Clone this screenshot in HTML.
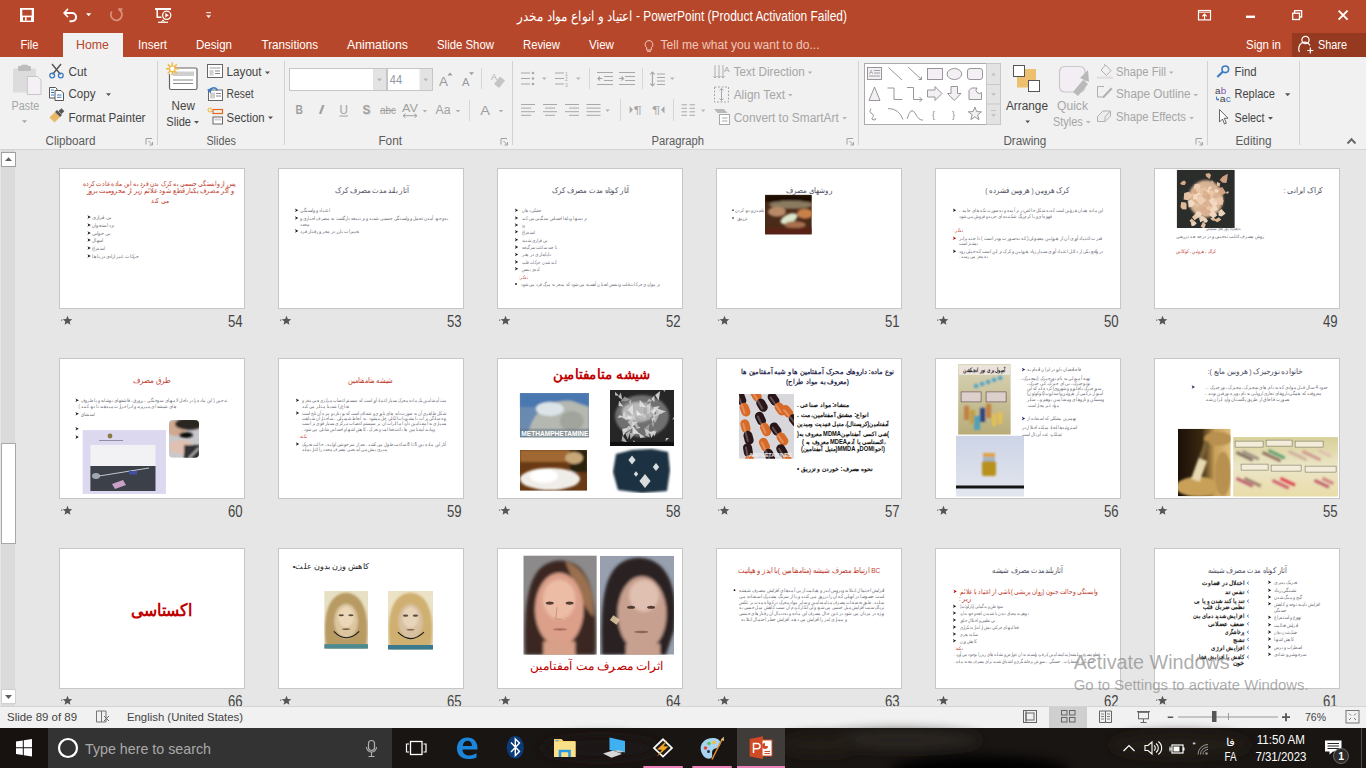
<!DOCTYPE html>
<html><head><meta charset="utf-8"><title>PowerPoint</title>
<style>
html,body{margin:0;padding:0;width:1366px;height:768px;overflow:hidden;background:#e6e6e6;}
svg{display:block;font-family:"Liberation Sans",sans-serif;}
text{font-family:"Liberation Sans",sans-serif;}
</style></head><body>
<svg width="1366" height="768" viewBox="0 0 1366 768">
<rect x="0" y="0" width="1366" height="768" fill="#e6e6e6" />
<rect x="0" y="0" width="1366" height="57" fill="#b7472a" />
<rect x="0" y="57" width="1366" height="92" fill="#f1f1f1" />
<rect x="0" y="149" width="1366" height="1" fill="#d4d4d4" />
<rect x="63" y="33" width="60" height="24" fill="#f1f1f1" />
<rect x="1292" y="33" width="74" height="24" fill="#953a21" />
<text x="517" y="21" font-size="14" fill="#ffffff" textLength="330" lengthAdjust="spacingAndGlyphs" >اعتیاد و انواع مواد مخدر - PowerPoint (Product Activation Failed)</text>
<rect x="20" y="8" width="14" height="14" fill="#ffffff" />
<rect x="22.3" y="9.8" width="9.4" height="5.8" fill="#b7472a" />
<rect x="23" y="17.2" width="8" height="3.4" fill="#b7472a" />
<rect x="25" y="17.2" width="1.6" height="3.4" fill="#ffffff" />
<path d="M64.5,13 H72 A4.1,4.1 0 0 1 72,21.2 H69.5" fill="none" stroke="#ffffff" stroke-width="2" />
<path d="M63,13 L67.5,8.3 L68.5,9.5 L65.2,13 L68.5,16.5 L67.5,17.7 Z" fill="#ffffff" />
<path d="M86,13.2 L91.3,13.2 L88.65,16.3 Z" fill="#ffffff" />
<path d="M118.5,9.5 A5.6,5.6 0 1 1 111.8,11.5" fill="none" stroke="#d9907c" stroke-width="1.8" />
<path d="M118.2,8 L123,8.6 L120.5,12.6 Z" fill="#d9907c" />
<rect x="155" y="8" width="16" height="2" fill="#ffffff" />
<path d="M157.2,10 V17.3 H161.5" fill="none" stroke="#ffffff" stroke-width="1.5" />
<circle cx="166.7" cy="15.3" r="4.1" fill="none" stroke="#ffffff" stroke-width="1.3"/>
<path d="M165.3,13 L168.8,15.3 L165.3,17.6 Z" fill="#ffffff" />
<path d="M158,22.3 H168" fill="none" stroke="#ffffff" stroke-width="1.2" />
<path d="M161.5,22 L163,19.8 L164.5,22" fill="none" stroke="#ffffff" stroke-width="1" />
<rect x="206.2" y="12.2" width="4.8" height="1" fill="#ffffff" />
<path d="M206.2,15.3 L211,15.3 L208.6,18 Z" fill="#ffffff" />
<rect x="1198.5" y="10.5" width="12" height="9.4" fill="none" stroke="#ffffff" stroke-width="1.2" />
<line x1="1198.5" y1="12.2" x2="1210.5" y2="12.2" stroke="#ffffff" stroke-width="1" />
<path d="M1204.5,19.5 V14.2 M1202.3,16.3 L1204.5,14 L1206.7,16.3" fill="none" stroke="#ffffff" stroke-width="1.2" />
<rect x="1246" y="15.6" width="9" height="2.4" fill="#ffffff" />
<rect x="1292.7" y="13.2" width="6.8" height="6.3" fill="none" stroke="#ffffff" stroke-width="1.3" />
<path d="M1294.6,13.2 V10.6 H1301.6 V17 H1299.5" fill="none" stroke="#ffffff" stroke-width="1.3" />
<path d="M1338.6,10.6 L1347.6,19.6 M1347.6,10.6 L1338.6,19.6" fill="none" stroke="#ffffff" stroke-width="1.9" />
<text x="20.5" y="49" font-size="12" fill="#ffffff" textLength="18" lengthAdjust="spacingAndGlyphs" >File</text>
<text x="138" y="49" font-size="12" fill="#ffffff" textLength="29" lengthAdjust="spacingAndGlyphs" >Insert</text>
<text x="196" y="49" font-size="12" fill="#ffffff" textLength="36" lengthAdjust="spacingAndGlyphs" >Design</text>
<text x="261.5" y="49" font-size="12" fill="#ffffff" textLength="56.5" lengthAdjust="spacingAndGlyphs" >Transitions</text>
<text x="347" y="49" font-size="12" fill="#ffffff" textLength="61" lengthAdjust="spacingAndGlyphs" >Animations</text>
<text x="437" y="49" font-size="12" fill="#ffffff" textLength="57" lengthAdjust="spacingAndGlyphs" >Slide Show</text>
<text x="523" y="49" font-size="12" fill="#ffffff" textLength="37" lengthAdjust="spacingAndGlyphs" >Review</text>
<text x="589" y="49" font-size="12" fill="#ffffff" textLength="25" lengthAdjust="spacingAndGlyphs" >View</text>
<text x="76" y="49" font-size="12" fill="#b7472a" textLength="33" lengthAdjust="spacingAndGlyphs" >Home</text>
<path d="M649,40.5 a4,4 0 0 0 -2.3,7.2 v2.3 h4.6 v-2.3 a4,4 0 0 0 -2.3,-7.2 z" fill="none" stroke="#f0c7bb" stroke-width="1" />
<line x1="647" y1="51.3" x2="651" y2="51.3" stroke="#f0c7bb" stroke-width="1" />
<text x="660.5" y="49" font-size="12" fill="#f0c7bb" textLength="159" lengthAdjust="spacingAndGlyphs" >Tell me what you want to do...</text>
<text x="1246" y="49" font-size="12" fill="#ffffff" textLength="35" lengthAdjust="spacingAndGlyphs" >Sign in</text>
<circle cx="1305.5" cy="40" r="3.6" fill="none" stroke="#ffffff" stroke-width="1.2"/>
<path d="M1299.5,52 a6,6.5 0 0 1 10.5,-6.5" fill="none" stroke="#ffffff" stroke-width="1.2" />
<path d="M1310.3,47.5 v6 M1307.3,50.5 h6" fill="none" stroke="#ffffff" stroke-width="1.2" />
<text x="1318" y="49" font-size="12" fill="#ffffff" textLength="29" lengthAdjust="spacingAndGlyphs" >Share</text>
<rect x="157" y="61" width="1" height="84" fill="#d2d2d2" />
<rect x="284" y="61" width="1" height="84" fill="#d2d2d2" />
<rect x="512" y="61" width="1" height="84" fill="#d2d2d2" />
<rect x="858" y="61" width="1" height="84" fill="#d2d2d2" />
<rect x="1207" y="61" width="1" height="84" fill="#d2d2d2" />
<rect x="1299" y="61" width="1" height="84" fill="#d2d2d2" />
<text x="45.5" y="145.4" font-size="12" fill="#5c5c5c" textLength="50" lengthAdjust="spacingAndGlyphs" >Clipboard</text>
<text x="206.4" y="145.4" font-size="12" fill="#5c5c5c" textLength="29.4" lengthAdjust="spacingAndGlyphs" >Slides</text>
<text x="378.4" y="145.4" font-size="12" fill="#5c5c5c" textLength="23.7" lengthAdjust="spacingAndGlyphs" >Font</text>
<text x="651.4" y="145.4" font-size="12" fill="#5c5c5c" textLength="52.6" lengthAdjust="spacingAndGlyphs" >Paragraph</text>
<text x="1003.4" y="145.4" font-size="12" fill="#5c5c5c" textLength="43" lengthAdjust="spacingAndGlyphs" >Drawing</text>
<text x="1235.5" y="145.4" font-size="12" fill="#5c5c5c" textLength="36" lengthAdjust="spacingAndGlyphs" >Editing</text>
<path d="M146,144.5 V138.5 H152" fill="none" stroke="#a0a0a0" stroke-width="1" />
<path d="M148.5,141 L152.5,145 M152.5,142 V145 H149.5" fill="none" stroke="#a0a0a0" stroke-width="1" />
<path d="M501,144.5 V138.5 H507" fill="none" stroke="#a0a0a0" stroke-width="1" />
<path d="M503.5,141 L507.5,145 M507.5,142 V145 H504.5" fill="none" stroke="#a0a0a0" stroke-width="1" />
<path d="M847,144.5 V138.5 H853" fill="none" stroke="#a0a0a0" stroke-width="1" />
<path d="M849.5,141 L853.5,145 M853.5,142 V145 H850.5" fill="none" stroke="#a0a0a0" stroke-width="1" />
<path d="M1196,144.5 V138.5 H1202" fill="none" stroke="#a0a0a0" stroke-width="1" />
<path d="M1198.5,141 L1202.5,145 M1202.5,142 V145 H1199.5" fill="none" stroke="#a0a0a0" stroke-width="1" />
<path d="M1347.5,143.5 L1351.5,139.3 L1355.5,143.5" fill="none" stroke="#6a6a6a" stroke-width="2" />
<rect x="13" y="68.5" width="23" height="24" fill="#dcdcdc" rx="1.5" />
<rect x="18" y="66" width="13" height="5" fill="#bdbdbd" rx="1" />
<rect x="21" y="64.8" width="7" height="3" fill="#bdbdbd" rx="1" />
<path d="M27.3,76.5 H37.5 L41,80 V94.5 H27.3 Z" fill="#f5f0f5" stroke="#c6c6c6" stroke-width="1" />
<text x="11.6" y="110" font-size="12" fill="#a6a6a6" textLength="27.6" lengthAdjust="spacingAndGlyphs" >Paste</text>
<path d="M22,120.3 L27,120.3 L24.5,123 Z" fill="#a6a6a6" />
<path d="M52,64 L60.5,74.5 M61,64 L52.5,74.5" fill="none" stroke="#555" stroke-width="1.4" />
<circle cx="52.2" cy="75.5" r="2.4" fill="none" stroke="#3b7bc4" stroke-width="1.3"/>
<circle cx="60.8" cy="75.5" r="2.4" fill="none" stroke="#3b7bc4" stroke-width="1.3"/>
<text x="68.5" y="76" font-size="12" fill="#444444" textLength="18.4" lengthAdjust="spacingAndGlyphs" >Cut</text>
<path d="M49.5,87.5 H55.5 L57,89 V98 H49.5 Z" fill="#fff" stroke="#555" stroke-width="1" />
<path d="M55,90.5 H61 L63.5,93 V100.5 H55 Z" fill="#fff" stroke="#555" stroke-width="1" />
<line x1="51" y1="90" x2="54" y2="90" stroke="#3b7bc4" stroke-width="1" />
<line x1="51" y1="92.5" x2="54" y2="92.5" stroke="#3b7bc4" stroke-width="1" />
<line x1="51" y1="95" x2="54" y2="95" stroke="#3b7bc4" stroke-width="1" />
<line x1="57" y1="95" x2="61.5" y2="95" stroke="#3b7bc4" stroke-width="1" />
<line x1="57" y1="97.3" x2="61.5" y2="97.3" stroke="#3b7bc4" stroke-width="1" />
<text x="68.5" y="98.3" font-size="12" fill="#444444" textLength="27" lengthAdjust="spacingAndGlyphs" >Copy</text>
<path d="M106,93.3 L111,93.3 L108.5,96 Z" fill="#555" />
<path d="M49.5,117.5 L55,112 L60,117 L54.5,122.5 Z" fill="#e8b864" />
<path d="M55,112 L60,117 L62,115 L57,110 Z" fill="#555" />
<path d="M58.5,111 L61.5,108.3 L64.3,111.2 L61.5,114 Z" fill="#555" />
<text x="68.5" y="121.5" font-size="12" fill="#444444" textLength="77" lengthAdjust="spacingAndGlyphs" >Format Painter</text>
<path d="M173.5,68 H195.5 Q197,68 197,69.5 V88 Q197,89.5 195.5,89.5 H171 Q169.5,89.5 169.5,88 V74" fill="#fff" stroke="#666" stroke-width="1.2" />
<rect x="173" y="71.5" width="21" height="4.5" fill="#cfcfcf" />
<line x1="173" y1="80" x2="193" y2="80" stroke="#888" stroke-width="1" />
<line x1="173" y1="83.5" x2="193" y2="83.5" stroke="#888" stroke-width="1" />
<line x1="175.3" y1="68.8" x2="178.60000000000002" y2="68.8" stroke="#f0b840" stroke-width="1.5" />
<line x1="174.42132034355964" y1="70.92132034355964" x2="176.75477272147526" y2="73.25477272147525" stroke="#f0b840" stroke-width="1.5" />
<line x1="172.3" y1="71.8" x2="172.3" y2="75.1" stroke="#f0b840" stroke-width="1.5" />
<line x1="170.17867965644038" y1="70.92132034355964" x2="167.84522727852476" y2="73.25477272147525" stroke="#f0b840" stroke-width="1.5" />
<line x1="169.3" y1="68.8" x2="166.0" y2="68.8" stroke="#f0b840" stroke-width="1.5" />
<line x1="170.17867965644038" y1="66.67867965644035" x2="167.84522727852476" y2="64.34522727852475" stroke="#f0b840" stroke-width="1.5" />
<line x1="172.3" y1="65.8" x2="172.3" y2="62.5" stroke="#f0b840" stroke-width="1.5" />
<line x1="174.42132034355964" y1="66.67867965644035" x2="176.75477272147526" y2="64.34522727852475" stroke="#f0b840" stroke-width="1.5" />
<circle cx="172.3" cy="68.8" r="2.8" fill="#ffffff" stroke="#f0b840" stroke-width="1.2"/>
<text x="171.5" y="109.5" font-size="12" fill="#444444" textLength="23.3" lengthAdjust="spacingAndGlyphs" >New</text>
<text x="166.3" y="126" font-size="12" fill="#444444" textLength="24.7" lengthAdjust="spacingAndGlyphs" >Slide</text>
<path d="M194,121 L199,121 L196.5,123.8 Z" fill="#555" />
<rect x="207.5" y="64.5" width="15" height="13" fill="#fff" stroke="#666" stroke-width="1" />
<rect x="209.5" y="67" width="11" height="2" fill="#cfcfcf" />
<rect x="209.5" y="70" width="4" height="5.5" fill="#cfcfcf" />
<line x1="215" y1="71" x2="220" y2="71" stroke="#888" stroke-width="1" />
<line x1="215" y1="73.5" x2="220" y2="73.5" stroke="#888" stroke-width="1" />
<text x="226.6" y="75.7" font-size="12" fill="#444444" textLength="35" lengthAdjust="spacingAndGlyphs" >Layout</text>
<path d="M265,71.5 L270,71.5 L267.5,74.2 Z" fill="#555" />
<rect x="208.5" y="90" width="14" height="10.5" fill="#fff" stroke="#666" stroke-width="1" />
<rect x="210" y="92.5" width="5" height="6" fill="#cfcfcf" />
<line x1="216" y1="93.5" x2="221" y2="93.5" stroke="#888" stroke-width="1" />
<line x1="216" y1="96" x2="221" y2="96" stroke="#888" stroke-width="1" />
<path d="M209,91.5 A4.5,4.5 0 0 1 217.5,90.5" fill="none" stroke="#3b7bc4" stroke-width="1.5" />
<path d="M207,89.5 L210.5,93.5 L212,88.8 Z" fill="#3b7bc4" />
<text x="226.6" y="98.3" font-size="12" fill="#444444" textLength="27" lengthAdjust="spacingAndGlyphs" >Reset</text>
<rect x="213" y="109.5" width="9.5" height="4" fill="none" stroke="#e06a1f" stroke-width="1.2" />
<rect x="213" y="117" width="9.5" height="7" fill="#fff" stroke="#666" stroke-width="1" />
<rect x="214.5" y="118.5" width="6.5" height="2" fill="#cfcfcf" />
<line x1="211.0" y1="110.0" x2="212.8" y2="110.0" stroke="#f0b840" stroke-width="1" />
<line x1="210.70710678118655" y1="110.70710678118655" x2="211.97989898732234" y2="111.97989898732233" stroke="#f0b840" stroke-width="1" />
<line x1="210.0" y1="111.0" x2="210.0" y2="112.8" stroke="#f0b840" stroke-width="1" />
<line x1="209.29289321881345" y1="110.70710678118655" x2="208.02010101267766" y2="111.97989898732233" stroke="#f0b840" stroke-width="1" />
<line x1="209.0" y1="110.0" x2="207.2" y2="110.0" stroke="#f0b840" stroke-width="1" />
<line x1="209.29289321881345" y1="109.29289321881345" x2="208.02010101267766" y2="108.02010101267767" stroke="#f0b840" stroke-width="1" />
<line x1="210.0" y1="109.0" x2="210.0" y2="107.2" stroke="#f0b840" stroke-width="1" />
<line x1="210.70710678118655" y1="109.29289321881345" x2="211.97989898732234" y2="108.02010101267767" stroke="#f0b840" stroke-width="1" />
<text x="226.6" y="121.5" font-size="12" fill="#444444" textLength="38" lengthAdjust="spacingAndGlyphs" >Section</text>
<path d="M268,116.5 L273,116.5 L270.5,119.2 Z" fill="#555" />
<rect x="289.5" y="68.5" width="97" height="22" fill="#ffffff" stroke="#c6c6c6" stroke-width="1" />
<rect x="373" y="69" width="13" height="21" fill="#e3e3e3" />
<path d="M377,78.5 L382,78.5 L379.5,81.3 Z" fill="#b5b5b5" />
<rect x="387.5" y="68.5" width="45" height="22" fill="#ffffff" stroke="#c6c6c6" stroke-width="1" />
<rect x="419.5" y="69" width="12.5" height="21" fill="#e3e3e3" />
<path d="M423.3,78.5 L428.3,78.5 L425.8,81.3 Z" fill="#b5b5b5" />
<text x="389.8" y="84.2" font-size="12" fill="#8d97a8" textLength="12.2" lengthAdjust="spacingAndGlyphs" >44</text>
<text x="439" y="85.5" font-size="13" fill="#9a9a9a" textLength="9" lengthAdjust="spacingAndGlyphs" >A</text>
<path d="M447.5,75.5 L450,72.5 L452.5,75.5 Z" fill="#9a9a9a" />
<text x="462" y="85.5" font-size="10.5" fill="#9a9a9a" textLength="7.5" lengthAdjust="spacingAndGlyphs" >A</text>
<path d="M469,72.3 L474,72.3 L471.5,75 Z" fill="#9a9a9a" />
<rect x="481" y="68" width="1" height="21" fill="#d6d6d6" />
<text x="491" y="80" font-size="9" fill="#b0b0b0" textLength="6" lengthAdjust="spacingAndGlyphs" >A</text>
<path d="M494,84 L500,76.5 L505,80.5 L499,88 Z" fill="#c4c4c4" />
<text x="295.6" y="113.7" font-size="12" fill="#a0a0a0" textLength="7.4" lengthAdjust="spacingAndGlyphs" font-weight="bold" >B</text>
<text x="318" y="113.7" font-size="12" fill="#a0a0a0" textLength="6.7" lengthAdjust="spacingAndGlyphs" font-style="italic">I</text>
<text x="339.5" y="113.7" font-size="12" fill="#a0a0a0" textLength="8.4" lengthAdjust="spacingAndGlyphs" >U</text>
<line x1="339.5" y1="116" x2="348" y2="116" stroke="#a0a0a0" stroke-width="1" />
<text x="363.5" y="114.7" font-size="12" fill="#d9d9d9" textLength="7.8" lengthAdjust="spacingAndGlyphs" font-weight="bold" >S</text>
<text x="362.5" y="113.7" font-size="12" fill="#a0a0a0" textLength="7.8" lengthAdjust="spacingAndGlyphs" font-weight="bold" >S</text>
<text x="380" y="113.7" font-size="11" fill="#a0a0a0" textLength="16" lengthAdjust="spacingAndGlyphs" >abc</text>
<line x1="380" y1="110.5" x2="396" y2="110.5" stroke="#a0a0a0" stroke-width="1" />
<text x="402" y="111.5" font-size="10.5" fill="#a0a0a0" textLength="16" lengthAdjust="spacingAndGlyphs" >AV</text>
<path d="M403,115.7 H417 M405.5,113.7 L403,115.7 L405.5,117.7 M414.5,113.7 L417,115.7 L414.5,117.7" fill="none" stroke="#a0a0a0" stroke-width="1" />
<path d="M422.6,110 L427,110 L424.8,112.5 Z" fill="#b0b0b0" />
<text x="435.5" y="114.2" font-size="12" fill="#a0a0a0" textLength="15" lengthAdjust="spacingAndGlyphs" >Aa</text>
<path d="M455.7,110 L460.3,110 L458,112.5 Z" fill="#b0b0b0" />
<rect x="469" y="100" width="1" height="21" fill="#d6d6d6" />
<text x="480.3" y="114.7" font-size="13" fill="#a0a0a0" textLength="9.7" lengthAdjust="spacingAndGlyphs" >A</text>
<path d="M498.7,110 L503.3,110 L501,112.5 Z" fill="#b0b0b0" />
<circle cx="533" cy="73.0" r="1.3" fill="#a8a8a8"/>
<line x1="521" y1="73.0" x2="530" y2="73.0" stroke="#a8a8a8" stroke-width="1" />
<circle cx="533" cy="78.5" r="1.3" fill="#a8a8a8"/>
<line x1="521" y1="78.5" x2="530" y2="78.5" stroke="#a8a8a8" stroke-width="1" />
<circle cx="533" cy="84.0" r="1.3" fill="#a8a8a8"/>
<line x1="521" y1="84.0" x2="530" y2="84.0" stroke="#a8a8a8" stroke-width="1" />
<path d="M542,77.5 L546.5,77.5 L544.25,80 Z" fill="#b5b5b5" />
<line x1="555" y1="73.0" x2="564" y2="73.0" stroke="#a8a8a8" stroke-width="1" />
<line x1="555" y1="78.5" x2="564" y2="78.5" stroke="#a8a8a8" stroke-width="1" />
<line x1="555" y1="84.0" x2="564" y2="84.0" stroke="#a8a8a8" stroke-width="1" />
<text x="565" y="75.5" font-size="5" fill="#a8a8a8" >1</text>
<text x="565" y="81" font-size="5" fill="#a8a8a8" >2</text>
<text x="565" y="86.5" font-size="5" fill="#a8a8a8" >3</text>
<path d="M576,77.5 L580.5,77.5 L578.25,80 Z" fill="#b5b5b5" />
<rect x="589" y="68" width="1" height="21" fill="#d6d6d6" />
<line x1="597" y1="72.5" x2="613" y2="72.5" stroke="#a8a8a8" stroke-width="1" />
<line x1="604" y1="76.5" x2="613" y2="76.5" stroke="#a8a8a8" stroke-width="1" />
<line x1="604" y1="80.5" x2="613" y2="80.5" stroke="#a8a8a8" stroke-width="1" />
<line x1="597" y1="84.5" x2="613" y2="84.5" stroke="#a8a8a8" stroke-width="1" />
<path d="M602.5,78.5 H598 M600,76.5 L598,78.5 L600,80.5" fill="none" stroke="#a8a8a8" stroke-width="1.2" />
<line x1="619" y1="72.5" x2="635" y2="72.5" stroke="#a8a8a8" stroke-width="1" />
<line x1="625" y1="76.5" x2="635" y2="76.5" stroke="#a8a8a8" stroke-width="1" />
<line x1="625" y1="80.5" x2="635" y2="80.5" stroke="#a8a8a8" stroke-width="1" />
<line x1="619" y1="84.5" x2="635" y2="84.5" stroke="#a8a8a8" stroke-width="1" />
<path d="M619,78.5 H623.5 M621.5,76.5 L623.5,78.5 L621.5,80.5" fill="none" stroke="#a8a8a8" stroke-width="1.2" />
<rect x="642" y="68" width="1" height="21" fill="#d6d6d6" />
<path d="M652.5,72 V86 M650.3,74.3 L652.5,72 L654.7,74.3 M650.3,83.7 L652.5,86 L654.7,83.7" fill="none" stroke="#a8a8a8" stroke-width="1.2" />
<line x1="657" y1="74.0" x2="665" y2="74.0" stroke="#a8a8a8" stroke-width="1" />
<line x1="657" y1="77.5" x2="665" y2="77.5" stroke="#a8a8a8" stroke-width="1" />
<line x1="657" y1="81.0" x2="665" y2="81.0" stroke="#a8a8a8" stroke-width="1" />
<line x1="657" y1="84.5" x2="665" y2="84.5" stroke="#a8a8a8" stroke-width="1" />
<path d="M670,77.5 L674.5,77.5 L672.25,80 Z" fill="#b5b5b5" />
<line x1="521" y1="104.5" x2="535" y2="104.5" stroke="#a8a8a8" stroke-width="1" />
<line x1="521" y1="108.1" x2="531" y2="108.1" stroke="#a8a8a8" stroke-width="1" />
<line x1="521" y1="111.7" x2="535" y2="111.7" stroke="#a8a8a8" stroke-width="1" />
<line x1="521" y1="115.3" x2="531" y2="115.3" stroke="#a8a8a8" stroke-width="1" />
<line x1="543.0" y1="104.5" x2="557.0" y2="104.5" stroke="#a8a8a8" stroke-width="1" />
<line x1="545.0" y1="108.1" x2="555.0" y2="108.1" stroke="#a8a8a8" stroke-width="1" />
<line x1="543.0" y1="111.7" x2="557.0" y2="111.7" stroke="#a8a8a8" stroke-width="1" />
<line x1="545.0" y1="115.3" x2="555.0" y2="115.3" stroke="#a8a8a8" stroke-width="1" />
<line x1="565" y1="104.5" x2="579" y2="104.5" stroke="#a8a8a8" stroke-width="1" />
<line x1="569" y1="108.1" x2="579" y2="108.1" stroke="#a8a8a8" stroke-width="1" />
<line x1="565" y1="111.7" x2="579" y2="111.7" stroke="#a8a8a8" stroke-width="1" />
<line x1="569" y1="115.3" x2="579" y2="115.3" stroke="#a8a8a8" stroke-width="1" />
<line x1="586.5" y1="104.5" x2="600.5" y2="104.5" stroke="#a8a8a8" stroke-width="1" />
<line x1="586.5" y1="108.1" x2="600.5" y2="108.1" stroke="#a8a8a8" stroke-width="1" />
<line x1="586.5" y1="111.7" x2="600.5" y2="111.7" stroke="#a8a8a8" stroke-width="1" />
<line x1="586.5" y1="115.3" x2="600.5" y2="115.3" stroke="#a8a8a8" stroke-width="1" />
<path d="M605.3,109.5 L609.8,109.5 L607.55,112 Z" fill="#b5b5b5" />
<rect x="620" y="99" width="1" height="22" fill="#d6d6d6" />
<text x="633.5" y="114" font-size="10" fill="#a8a8a8" textLength="8.5" lengthAdjust="spacingAndGlyphs" >¶</text>
<path d="M629.6,106 L633,109.8 L629.6,113.6 Z" fill="#a8a8a8" />
<text x="652" y="114" font-size="10" fill="#a8a8a8" textLength="8.5" lengthAdjust="spacingAndGlyphs" >¶</text>
<path d="M664.5,106 L661,109.8 L664.5,113.6 Z" fill="#a8a8a8" />
<rect x="673" y="99" width="1" height="22" fill="#d6d6d6" />
<line x1="681.5" y1="104.8" x2="687" y2="104.8" stroke="#a8a8a8" stroke-width="1" />
<line x1="689.5" y1="104.8" x2="695" y2="104.8" stroke="#a8a8a8" stroke-width="1" />
<line x1="681.5" y1="108.3" x2="687" y2="108.3" stroke="#a8a8a8" stroke-width="1" />
<line x1="689.5" y1="108.3" x2="695" y2="108.3" stroke="#a8a8a8" stroke-width="1" />
<line x1="681.5" y1="111.8" x2="687" y2="111.8" stroke="#a8a8a8" stroke-width="1" />
<line x1="689.5" y1="111.8" x2="695" y2="111.8" stroke="#a8a8a8" stroke-width="1" />
<line x1="681.5" y1="115.3" x2="687" y2="115.3" stroke="#a8a8a8" stroke-width="1" />
<line x1="689.5" y1="115.3" x2="695" y2="115.3" stroke="#a8a8a8" stroke-width="1" />
<path d="M701,109.5 L705.5,109.5 L703.25,112 Z" fill="#b5b5b5" />
<text x="733.7" y="76" font-size="12" fill="#a6a6a6" textLength="71" lengthAdjust="spacingAndGlyphs" >Text Direction</text>
<path d="M807.7,71.5 L812.3,71.5 L810,74 Z" fill="#b5b5b5" />
<path d="M715,65 V78 M713.5,76 L715,78 L716.5,76" fill="none" stroke="#a8a8a8" stroke-width="0.9" />
<path d="M719,65 V78 M717.5,76 L719,78 L720.5,76" fill="none" stroke="#a8a8a8" stroke-width="0.9" />
<path d="M723,65 V78 M721.5,76 L723,78 L724.5,76" fill="none" stroke="#a8a8a8" stroke-width="0.9" />
<text x="724" y="71.5" font-size="8" fill="#a8a8a8" textLength="5.5" lengthAdjust="spacingAndGlyphs" >A</text>
<text x="733.7" y="98.6" font-size="12" fill="#a6a6a6" textLength="51.3" lengthAdjust="spacingAndGlyphs" >Align Text</text>
<path d="M788,94 L792.6,94 L790.3,96.5 Z" fill="#b5b5b5" />
<rect x="714.5" y="87" width="14" height="15" fill="none" stroke="#a8a8a8" stroke-width="1" stroke-dasharray="2,1.5"/>
<path d="M721.5,88.5 V100.5 M719.5,90.5 L721.5,88.5 L723.5,90.5 M719.5,98.5 L721.5,100.5 L723.5,98.5" fill="none" stroke="#a8a8a8" stroke-width="1" />
<text x="733.7" y="121.6" font-size="12" fill="#a6a6a6" textLength="105" lengthAdjust="spacingAndGlyphs" >Convert to SmartArt</text>
<path d="M842.3,117 L846.9,117 L844.6,119.5 Z" fill="#b5b5b5" />
<path d="M714,109 H724 L727.5,113 H717.5 Z" fill="#b8b8b8" />
<rect x="719.5" y="114.5" width="10" height="10" fill="#fff" stroke="#a8a8a8" stroke-width="1" />
<line x1="722" y1="118" x2="727.5" y2="118" stroke="#a8a8a8" stroke-width="1" />
<line x1="722" y1="121" x2="727.5" y2="121" stroke="#a8a8a8" stroke-width="1" />
<rect x="864.5" y="63.5" width="122" height="61" fill="#ffffff" stroke="#ababab" stroke-width="1" />
<rect x="986.5" y="63.5" width="14" height="61" fill="#e3e3e3" stroke="#c8c8c8" stroke-width="1" />
<line x1="986.5" y1="84.5" x2="1000.5" y2="84.5" stroke="#c8c8c8" stroke-width="1" />
<line x1="986.5" y1="104" x2="1000.5" y2="104" stroke="#c8c8c8" stroke-width="1" />
<path d="M991,75.5 L993.5,72.5 L996,75.5 Z" fill="#c4c4c4" />
<path d="M991,93 L996,93 L993.5,96 Z" fill="#c4c4c4" />
<line x1="991" y1="110.5" x2="996" y2="110.5" stroke="#c4c4c4" stroke-width="1" />
<path d="M991,114 L996,114 L993.5,117 Z" fill="#c4c4c4" />
<rect x="867.5" y="67.5" width="14" height="12" fill="#f4eff4" stroke="#8c8c8c" stroke-width="0.9" />
<text x="869" y="73.5" font-size="6" fill="#8c8c8c" >A</text>
<line x1="874" y1="70.5" x2="880" y2="70.5" stroke="#8c8c8c" stroke-width="0.8" />
<line x1="874" y1="73" x2="880" y2="73" stroke="#8c8c8c" stroke-width="0.8" />
<line x1="869" y1="76" x2="880" y2="76" stroke="#8c8c8c" stroke-width="0.8" />
<line x1="888.5" y1="67.5" x2="902" y2="80" stroke="#8c8c8c" stroke-width="0.9" />
<path d="M908,67 L921.5,79.5 M921.5,76.5 V79.5 H918.5" fill="none" stroke="#8c8c8c" stroke-width="0.9" />
<rect x="927.5" y="68.5" width="15" height="11" fill="#f4eff4" stroke="#8c8c8c" stroke-width="0.9" />
<ellipse cx="954.4" cy="74" rx="7.3" ry="5.5" fill="#f4eff4" stroke="#8c8c8c" stroke-width="0.9"/>
<rect x="967.5" y="68.5" width="15" height="11" fill="#f4eff4" stroke="#8c8c8c" stroke-width="0.9" rx="2.5" />
<path d="M869,100.5 L874.5,87 L880,100.5 Z" fill="#f4eff4" stroke="#8c8c8c" stroke-width="0.9" />
<path d="M887.5,88 H894 V99.5 H902.5" fill="none" stroke="#8c8c8c" stroke-width="0.9" />
<path d="M907,87.5 H913.5 V99.5 H922 M919.5,97 L922,99.5 L919.5,102" fill="none" stroke="#8c8c8c" stroke-width="0.9" />
<path d="M927.5,90 H935 V86.5 L942,93.5 L935,100.5 V97 H927.5 Z" fill="#f4eff4" stroke="#8c8c8c" stroke-width="0.9" />
<path d="M951,86.5 H957.5 V93.5 H961 L954.3,100.5 L947.5,93.5 H951 Z" fill="#f4eff4" stroke="#8c8c8c" stroke-width="0.9" />
<path d="M969,90.5 L971.5,88 H977 A3,3 0 0 0 981.5,92.5 V99.5 H969 Z" fill="#f4eff4" stroke="#8c8c8c" stroke-width="0.9" />
<path d="M871,108.5 Q868.5,111.5 871,113 Q875,115 872.5,117.5 Q870.5,119.5 874,120 Q876.5,120 875,118" fill="none" stroke="#8c8c8c" stroke-width="0.9" />
<path d="M888,108.5 Q899,108.5 903,119.5" fill="none" stroke="#8c8c8c" stroke-width="0.9" />
<path d="M907,119 Q911,106 915,113 Q919,121 923,120" fill="none" stroke="#8c8c8c" stroke-width="0.9" />
<text x="932" y="117.5" font-size="9" fill="#8c8c8c" >{</text>
<text x="952" y="117.5" font-size="9" fill="#8c8c8c" >}</text>
<path d="M974.9,107 L976.7,111.6 L981.5,111.8 L977.7,114.8 L979,119.6 L974.9,116.9 L970.8,119.6 L972.1,114.8 L968.3,111.8 L973.1,111.6 Z" fill="#f4eff4" stroke="#8c8c8c" stroke-width="0.9" />
<rect x="1017" y="69" width="19" height="18.5" fill="#edc06f" />
<rect x="1013.5" y="65.5" width="11" height="11" fill="#ffffff" stroke="#555" stroke-width="1" />
<rect x="1028.5" y="80.5" width="11" height="11" fill="#ffffff" stroke="#555" stroke-width="1" />
<text x="1006" y="110" font-size="12" fill="#444444" textLength="42" lengthAdjust="spacingAndGlyphs" >Arrange</text>
<path d="M1025.4,120.5 L1030,120.5 L1027.7,123.2 Z" fill="#555" />
<rect x="1059.5" y="66.5" width="25.5" height="25.5" fill="#f3eef3" stroke="#c9c9c9" stroke-width="1.2" rx="5" />
<path d="M1073,92 L1083,80 L1088,84 L1078,96 Z" fill="#b9b9b9" />
<path d="M1080,78 L1088,70 L1089,82 Z" fill="#b9b9b9" />
<text x="1057" y="110" font-size="12" fill="#a6a6a6" textLength="31" lengthAdjust="spacingAndGlyphs" >Quick</text>
<text x="1053" y="125.6" font-size="12" fill="#a6a6a6" textLength="29.7" lengthAdjust="spacingAndGlyphs" >Styles</text>
<path d="M1086,121 L1090.6,121 L1088.3,123.5 Z" fill="#b5b5b5" />
<path d="M1101,70 L1105.5,65 L1111,70.5 L1106.5,75.5 Z" fill="none" stroke="#b0b0b0" stroke-width="1" />
<path d="M1104,64 L1106,66" fill="none" stroke="#b0b0b0" stroke-width="1" />
<rect x="1097" y="76.5" width="16" height="2.5" fill="#e4dde4" />
<text x="1116" y="75.8" font-size="12" fill="#a6a6a6" textLength="50" lengthAdjust="spacingAndGlyphs" >Shape Fill</text>
<path d="M1169,71.5 L1173.6,71.5 L1171.3,74 Z" fill="#b5b5b5" />
<path d="M1104,86.5 H1097.5 V97 H1104" fill="none" stroke="#b0b0b0" stroke-width="1" />
<path d="M1103,96 L1111,87.5 L1112.5,89 L1104.5,97.5 L1102.5,98 Z" fill="#b0b0b0" />
<text x="1116" y="98.4" font-size="12" fill="#a6a6a6" textLength="74.6" lengthAdjust="spacingAndGlyphs" >Shape Outline</text>
<path d="M1193.4,94 L1198,94 L1195.7,96.5 Z" fill="#b5b5b5" />
<path d="M1097.5,116.5 L1103,111 H1110.5 V116 L1105,121.5 H1097.5 Z" fill="#ededed" stroke="#b0b0b0" stroke-width="1" />
<path d="M1105,121.5 V117 L1110.5,111" fill="none" stroke="#b0b0b0" stroke-width="1" />
<text x="1116" y="121.4" font-size="12" fill="#a6a6a6" textLength="70" lengthAdjust="spacingAndGlyphs" >Shape Effects</text>
<path d="M1189.4,117 L1194,117 L1191.7,119.5 Z" fill="#b5b5b5" />
<circle cx="1225.3" cy="69.3" r="3.3" fill="none" stroke="#3b7bc4" stroke-width="1.6"/>
<path d="M1222.8,71.8 L1217.3,77" fill="none" stroke="#3b7bc4" stroke-width="2.2" />
<text x="1234.5" y="75.7" font-size="12" fill="#444444" textLength="22" lengthAdjust="spacingAndGlyphs" >Find</text>
<text x="1215" y="94" font-size="9" fill="#444444" textLength="5.5" lengthAdjust="spacingAndGlyphs" >a</text>
<text x="1220.8" y="94" font-size="9" fill="#8e4fb5" textLength="5.5" lengthAdjust="spacingAndGlyphs" >b</text>
<text x="1219.8" y="101.5" font-size="9.5" fill="#444444" textLength="11" lengthAdjust="spacingAndGlyphs" >ac</text>
<rect x="1226" y="95.5" width="5" height="6" fill="#f1f1f1" />
<text x="1225.8" y="101.5" font-size="9.5" fill="#3b7bc4" textLength="5" lengthAdjust="spacingAndGlyphs" >c</text>
<path d="M1216.5,96.5 V99.5 H1219 M1217.5,98.3 L1219,99.5 L1217.5,100.7" fill="none" stroke="#3b7bc4" stroke-width="0.9" />
<text x="1234.5" y="98.4" font-size="12" fill="#444444" textLength="40.4" lengthAdjust="spacingAndGlyphs" >Replace</text>
<path d="M1285,93.3 L1290.3,93.3 L1287.65,96.2 Z" fill="#555" />
<path d="M1219.5,109.5 V122 L1222.5,119 L1224.5,124 L1226.3,123.2 L1224.3,118.2 L1228,118.2 Z" fill="#fff" stroke="#555" stroke-width="0.9" />
<text x="1234.5" y="121.5" font-size="12" fill="#444444" textLength="30" lengthAdjust="spacingAndGlyphs" >Select</text>
<path d="M1268,117 L1273,117 L1270.5,119.7 Z" fill="#555" />
<rect x="59.5" y="168.5" width="185" height="140" fill="#ffffff" stroke="#c6c6c6" stroke-width="1" />
<rect x="278.5" y="168.5" width="185" height="140" fill="#ffffff" stroke="#c6c6c6" stroke-width="1" />
<rect x="497.5" y="168.5" width="185" height="140" fill="#ffffff" stroke="#c6c6c6" stroke-width="1" />
<rect x="716.5" y="168.5" width="185" height="140" fill="#ffffff" stroke="#c6c6c6" stroke-width="1" />
<rect x="935.5" y="168.5" width="185" height="140" fill="#ffffff" stroke="#c6c6c6" stroke-width="1" />
<rect x="1154.5" y="168.5" width="185" height="140" fill="#ffffff" stroke="#c6c6c6" stroke-width="1" />
<rect x="59.5" y="358.5" width="185" height="140" fill="#ffffff" stroke="#c6c6c6" stroke-width="1" />
<rect x="278.5" y="358.5" width="185" height="140" fill="#ffffff" stroke="#c6c6c6" stroke-width="1" />
<rect x="497.5" y="358.5" width="185" height="140" fill="#ffffff" stroke="#c6c6c6" stroke-width="1" />
<rect x="716.5" y="358.5" width="185" height="140" fill="#ffffff" stroke="#c6c6c6" stroke-width="1" />
<rect x="935.5" y="358.5" width="185" height="140" fill="#ffffff" stroke="#c6c6c6" stroke-width="1" />
<rect x="1154.5" y="358.5" width="185" height="140" fill="#ffffff" stroke="#c6c6c6" stroke-width="1" />
<rect x="59.5" y="548.5" width="185" height="140" fill="#ffffff" stroke="#c6c6c6" stroke-width="1" />
<rect x="278.5" y="548.5" width="185" height="140" fill="#ffffff" stroke="#c6c6c6" stroke-width="1" />
<rect x="497.5" y="548.5" width="185" height="140" fill="#ffffff" stroke="#c6c6c6" stroke-width="1" />
<rect x="716.5" y="548.5" width="185" height="140" fill="#ffffff" stroke="#c6c6c6" stroke-width="1" />
<rect x="935.5" y="548.5" width="185" height="140" fill="#ffffff" stroke="#c6c6c6" stroke-width="1" />
<rect x="1154.5" y="548.5" width="185" height="140" fill="#ffffff" stroke="#c6c6c6" stroke-width="1" />
<defs>
<linearGradient id="g51" x1="0" y1="0" x2="0" y2="1"><stop offset="0" stop-color="#1c0f08"/><stop offset="0.25" stop-color="#3a2414"/><stop offset="0.5" stop-color="#8a5a3a"/><stop offset="1" stop-color="#5a2a14"/></linearGradient>
<radialGradient id="g49" cx="0.5" cy="0.45" r="0.5"><stop offset="0" stop-color="#f0cfb0"/><stop offset="0.6" stop-color="#e2b896"/><stop offset="1" stop-color="#2c2e2c" stop-opacity="0"/></radialGradient>
<linearGradient id="gsky" x1="0" y1="0" x2="1" y2="1"><stop offset="0" stop-color="#3a6aa8"/><stop offset="0.5" stop-color="#7aa0c8"/><stop offset="1" stop-color="#e8e8e8"/></linearGradient>
<radialGradient id="gcry" cx="0.5" cy="0.45" r="0.6"><stop offset="0" stop-color="#f4f4f4"/><stop offset="0.5" stop-color="#b8b8b8"/><stop offset="1" stop-color="#202020"/></radialGradient>
<radialGradient id="gpow" cx="0.45" cy="0.65" r="0.55"><stop offset="0" stop-color="#ffffff"/><stop offset="0.55" stop-color="#f0e6dc"/><stop offset="1" stop-color="#8a4a1a"/></radialGradient>
<radialGradient id="gice" cx="0.5" cy="0.5" r="0.6"><stop offset="0" stop-color="#2a4a5a"/><stop offset="0.8" stop-color="#1a3040"/><stop offset="1" stop-color="#ffffff"/></radialGradient>
<linearGradient id="gvial" x1="0" y1="0" x2="0" y2="1"><stop offset="0" stop-color="#d8d4b8"/><stop offset="1" stop-color="#b8ac78"/></linearGradient>
<linearGradient id="gbg56" x1="0" y1="0" x2="0" y2="1"><stop offset="0" stop-color="#cdd4e6"/><stop offset="1" stop-color="#e2e6ee"/></linearGradient>
<linearGradient id="gsep" x1="0" y1="0" x2="1" y2="0"><stop offset="0" stop-color="#1a1008"/><stop offset="0.45" stop-color="#3a2810"/><stop offset="0.7" stop-color="#c8a058"/><stop offset="1" stop-color="#e0c080"/></linearGradient>
<linearGradient id="gcream" x1="0" y1="0" x2="0" y2="1"><stop offset="0" stop-color="#d8d098"/><stop offset="0.5" stop-color="#ece6c8"/><stop offset="1" stop-color="#e8dca8"/></linearGradient>
<radialGradient id="gskin" cx="0.5" cy="0.45" r="0.5"><stop offset="0" stop-color="#e8b8a0"/><stop offset="1" stop-color="#c88870"/></radialGradient>
<radialGradient id="gskin2" cx="0.5" cy="0.45" r="0.5"><stop offset="0" stop-color="#e0b8a8"/><stop offset="1" stop-color="#b08070"/></radialGradient>
<radialGradient id="gskin3" cx="0.5" cy="0.45" r="0.5"><stop offset="0" stop-color="#e8d0a8"/><stop offset="1" stop-color="#c8a880"/></radialGradient>
<filter id="bl" x="-20%" y="-20%" width="140%" height="140%"><feGaussianBlur stdDeviation="0.8"/></filter>
<filter id="bl2" x="-20%" y="-20%" width="140%" height="140%"><feGaussianBlur stdDeviation="1.5"/></filter>
</defs>
<text x="83" y="186.04" font-size="6.5" fill="#c0392b" textLength="153" lengthAdjust="spacingAndGlyphs" >‫پس از وابستگی جسمی به کرک بدن فرد به این ماده عادت کرده‬</text>
<text x="86.7" y="193.44" font-size="6.5" fill="#c0392b" textLength="147.0" lengthAdjust="spacingAndGlyphs" >‫و اگر مصرف یکبار قطع شود علائم زیر از محرومیت بروز‬</text>
<text x="151.4" y="202.74" font-size="6.5" fill="#c0392b" textLength="17.6" lengthAdjust="spacingAndGlyphs" >‫می کند‬</text>
<path d="M87.40,215.20 L90.80,217.00 L87.40,218.80 L88.40,217.00 Z" fill="#111" />
<text x="92" y="218.8" font-size="5" fill="#6e6e78" textLength="19" lengthAdjust="spacingAndGlyphs" >‫بی قراری‬</text>
<path d="M87.40,223.20 L90.80,225.00 L87.40,226.80 L88.40,225.00 Z" fill="#111" />
<text x="92" y="226.8" font-size="5" fill="#6e6e78" textLength="22" lengthAdjust="spacingAndGlyphs" >‫درد استخوان‬</text>
<path d="M87.40,231.20 L90.80,233.00 L87.40,234.80 L88.40,233.00 Z" fill="#111" />
<text x="92" y="234.8" font-size="5" fill="#6e6e78" textLength="18" lengthAdjust="spacingAndGlyphs" >‫بی خوابی‬</text>
<path d="M87.40,238.20 L90.80,240.00 L87.40,241.80 L88.40,240.00 Z" fill="#111" />
<text x="92" y="241.8" font-size="5" fill="#6e6e78" textLength="11" lengthAdjust="spacingAndGlyphs" >‫اسهال‬</text>
<path d="M87.40,246.20 L90.80,248.00 L87.40,249.80 L88.40,248.00 Z" fill="#111" />
<text x="92" y="249.8" font-size="5" fill="#6e6e78" textLength="13" lengthAdjust="spacingAndGlyphs" >‫استفراغ‬</text>
<path d="M87.40,254.20 L90.80,256.00 L87.40,257.80 L88.40,256.00 Z" fill="#111" />
<text x="92" y="257.8" font-size="5" fill="#6e6e78" textLength="47" lengthAdjust="spacingAndGlyphs" >‫حرکات غیر ارادی در پاها‬</text>
<text x="335" y="192.5" font-size="7.5" fill="#505064" textLength="73.3" lengthAdjust="spacingAndGlyphs" >‫آثار بلند مدت مصرف کرک‬</text>
<path d="M294.90,208.40 L298.30,210.20 L294.90,212.00 L295.90,210.20 Z" fill="#111" />
<text x="300" y="212.0" font-size="5" fill="#6e6e78" textLength="29.8" lengthAdjust="spacingAndGlyphs" >‫اعتیاد و وابستگی‬</text>
<path d="M294.90,216.20 L298.30,218.00 L294.90,219.80 L295.90,218.00 Z" fill="#111" />
<text x="300" y="219.8" font-size="5" fill="#6e6e78" textLength="148" lengthAdjust="spacingAndGlyphs" >‫به وجود آمدن تحمل و وابستگی جسمی شدید و در نتیجه بازگشت به مصرف اجباری و‬</text>
<text x="300" y="225.8" font-size="5" fill="#6e6e78" textLength="9.5" lengthAdjust="spacingAndGlyphs" >‫مجدد‬</text>
<path d="M294.90,229.10 L298.30,230.90 L294.90,232.70 L295.90,230.90 Z" fill="#111" />
<text x="300" y="232.7" font-size="5" fill="#6e6e78" textLength="59" lengthAdjust="spacingAndGlyphs" >‫تغییرات بارز در مغز و رفتار فرد‬</text>
<text x="552" y="192.5" font-size="7.5" fill="#505064" textLength="77" lengthAdjust="spacingAndGlyphs" >‫آثار کوتاه مدت مصرف کرک‬</text>
<path d="M514.80,208.40 L518.20,210.20 L514.80,212.00 L515.80,210.20 Z" fill="#111" />
<text x="522" y="212.0" font-size="5" fill="#6e6e78" textLength="19.4" lengthAdjust="spacingAndGlyphs" >‫خشکی دهان‬</text>
<path d="M514.80,216.20 L518.20,218.00 L514.80,219.80 L515.80,218.00 Z" fill="#111" />
<text x="522" y="219.8" font-size="5" fill="#6e6e78" textLength="64.7" lengthAdjust="spacingAndGlyphs" >‫در دستها و پاها احساس سنگینی می کند‬</text>
<path d="M514.80,223.20 L518.20,225.00 L514.80,226.80 L515.80,225.00 Z" fill="#111" />
<text x="522" y="226.8" font-size="5" fill="#6e6e78" textLength="2.7" lengthAdjust="spacingAndGlyphs" >‫تهوع‬</text>
<path d="M514.80,230.00 L518.20,231.80 L514.80,233.60 L515.80,231.80 Z" fill="#111" />
<text x="522" y="233.6" font-size="5" fill="#6e6e78" textLength="12.9" lengthAdjust="spacingAndGlyphs" >‫استفراغ‬</text>
<path d="M514.80,237.90 L518.20,239.70 L514.80,241.50 L515.80,239.70 Z" fill="#111" />
<text x="522" y="241.5" font-size="5" fill="#6e6e78" textLength="25" lengthAdjust="spacingAndGlyphs" >‫بی قراری شدید‬</text>
<path d="M514.80,245.30 L518.20,247.10 L514.80,248.90 L515.80,247.10 Z" fill="#111" />
<text x="522" y="248.9" font-size="5" fill="#6e6e78" textLength="35" lengthAdjust="spacingAndGlyphs" >‫تا چند ساعت سرگیجه‬</text>
<path d="M514.80,252.70 L518.20,254.50 L514.80,256.30 L515.80,254.50 Z" fill="#111" />
<text x="522" y="256.3" font-size="5" fill="#6e6e78" textLength="28.6" lengthAdjust="spacingAndGlyphs" >‫ناپایداری در مغز‬</text>
<path d="M514.80,260.10 L518.20,261.90 L514.80,263.70 L515.80,261.90 Z" fill="#111" />
<text x="522" y="263.7" font-size="5" fill="#6e6e78" textLength="34" lengthAdjust="spacingAndGlyphs" >‫کند شدن حرکات قلب‬</text>
<path d="M514.80,267.00 L518.20,268.80 L514.80,270.60 L515.80,268.80 Z" fill="#111" />
<text x="522" y="270.6" font-size="5" fill="#6e6e78" textLength="17.5" lengthAdjust="spacingAndGlyphs" >‫کندی تنفس‬</text>
<text x="519" y="278.8" font-size="5" fill="#c0392b" textLength="8.5" lengthAdjust="spacingAndGlyphs" >‫تذکر:‬</text>
<circle cx="516.00" cy="284.00" r="0.9" fill="#111"/>
<text x="521" y="285.8" font-size="5" fill="#6e6e78" textLength="138.7" lengthAdjust="spacingAndGlyphs" >‫در مواردی حرکات قلب و تنفس انچنان آهسته می شود که منجر به مرگ فرد می شود‬</text>
<text x="786.3" y="192.9" font-size="7.5" fill="#505064" textLength="46.2" lengthAdjust="spacingAndGlyphs" >‫روشهای مصرف‬</text>
<clipPath id="cl1"><rect x="765" y="194.8" width="46.8" height="39.8" rx="0"/></clipPath><g clip-path="url(#cl1)">
<rect x="765" y="194.8" width="46.8" height="39.8" fill="#4a2a18" />
<g filter="url(#bl)"><rect x="765" y="194.8" width="46.8" height="7" fill="#1a0c06"/><ellipse cx="791" cy="204.8" rx="22" ry="4" fill="#8a7a60"/><ellipse cx="777" cy="211.8" rx="9" ry="5" fill="#b88a68"/><ellipse cx="805" cy="213.8" rx="8" ry="5" fill="#c8804a"/><ellipse cx="789" cy="218.8" rx="9" ry="4.5" fill="#dce6cc" transform="rotate(-25 789 218.8)"/><ellipse cx="795" cy="224.8" rx="11" ry="3.5" fill="#a87050"/><rect x="765" y="227.8" width="46.8" height="6.799999999999997" fill="#5a2412"/></g>
</g>
<circle cx="733.00" cy="210.20" r="0.9" fill="#555"/>
<text x="735.4" y="212.0" font-size="5" fill="#6e6e78" textLength="28.6" lengthAdjust="spacingAndGlyphs" >‫بلعیدن و دود کردن‬</text>
<circle cx="733.00" cy="218.00" r="0.9" fill="#555"/>
<text x="737" y="219.8" font-size="5" fill="#6e6e78" textLength="10.4" lengthAdjust="spacingAndGlyphs" >‫تزریق‬</text>
<text x="985.3" y="192.9" font-size="7.5" fill="#505064" textLength="83.7" lengthAdjust="spacingAndGlyphs" >‫کرک هروبین ( هروبین فشرده )‬</text>
<path d="M952.80,208.40 L956.20,210.20 L952.80,212.00 L953.80,210.20 Z" fill="#111" />
<text x="959" y="212.0" font-size="5" fill="#6e6e78" textLength="144" lengthAdjust="spacingAndGlyphs" >‫این ماده همان هروئین است که به شکل خالص تر در آمده و به صورت تکه های جامد ،‬</text>
<text x="959" y="217.8" font-size="5" fill="#6e6e78" textLength="92.5" lengthAdjust="spacingAndGlyphs" >‫قهوه ای و یا کرم رنگ شکننده ای خرید و فروش می شود‬</text>
<text x="952.6" y="231.8" font-size="5" fill="#c0392b" textLength="10.1" lengthAdjust="spacingAndGlyphs" >‫تذکر :‬</text>
<path d="M952.80,236.50 L956.20,238.30 L952.80,240.10 L953.80,238.30 Z" fill="#c00000" />
<text x="959" y="240.1" font-size="5" fill="#6e6e78" textLength="143.3" lengthAdjust="spacingAndGlyphs" >‫قدرت اعتیاد آوری آن از هروئین معمولی( که به صورت پودر است ) تا چند برابر‬</text>
<text x="959" y="244.7" font-size="5" fill="#6e6e78" textLength="18.5" lengthAdjust="spacingAndGlyphs" >‫بیشتر است‬</text>
<path d="M952.80,249.40 L956.20,251.20 L952.80,253.00 L953.80,251.20 Z" fill="#111" />
<text x="959" y="253.0" font-size="5" fill="#6e6e78" textLength="144" lengthAdjust="spacingAndGlyphs" >‫در واقع یکی از دلایل اعتیاد آوری بسیار زیاد هروئین و کرک در این است که خیلی زود‬</text>
<text x="959" y="258.2" font-size="5" fill="#6e6e78" textLength="28.7" lengthAdjust="spacingAndGlyphs" >‫به مغز می رسد .‬</text>
<clipPath id="cl2"><rect x="1176.7" y="169.8" width="58.099999999999994" height="58.2" rx="0"/></clipPath><g clip-path="url(#cl2)">
<rect x="1176.7" y="169.8" width="58.099999999999994" height="58.2" fill="#2b2d2b" />
<g filter="url(#bl)"><ellipse cx="1205.75" cy="198.9" rx="17.429999999999996" ry="18.624000000000002" fill="#d8b494"/></g>
<g opacity="0.95"><polygon points="1195.8,203.8 1192.2,206.6 1188.7,207.5 1188.0,200.7 1191.6,199.4" fill="#f4dcc4"/><polygon points="1210.7,207.9 1209.3,209.4 1206.6,208.9 1207.4,207.2 1209.5,205.5" fill="#f4dcc4"/><polygon points="1229.2,192.0 1227.2,193.9 1226.0,192.9 1227.1,191.2" fill="#e8c2a0"/><polygon points="1215.8,213.5 1215.2,217.3 1209.9,215.6 1208.3,214.5 1211.1,211.8 1213.9,211.6" fill="#e8c2a0"/><polygon points="1206.5,196.4 1205.0,199.4 1201.8,198.3 1202.3,195.7 1204.5,195.2" fill="#d8a888"/><polygon points="1208.0,220.9 1206.2,222.7 1204.4,222.8 1203.1,220.5 1203.9,217.2 1206.2,217.9" fill="#f4dcc4"/><polygon points="1186.1,182.5 1184.8,185.0 1182.2,184.9 1180.0,183.7 1182.3,181.3 1184.4,180.4" fill="#dcb090"/><polygon points="1201.1,188.2 1199.4,190.3 1198.0,188.2 1199.4,187.0" fill="#f0d0b4"/><polygon points="1225.6,213.6 1221.7,216.6 1218.6,215.8 1218.4,211.6 1221.5,208.9" fill="#f4dcc4"/><polygon points="1215.8,206.6 1214.0,212.1 1210.4,211.4 1208.4,208.5 1211.1,204.9 1215.4,203.7" fill="#f0d0b4"/><polygon points="1216.3,219.3 1213.3,221.1 1210.1,218.8 1212.4,217.3" fill="#e8c2a0"/><polygon points="1221.3,219.7 1217.3,222.3 1213.9,220.3 1218.9,217.2" fill="#e8c2a0"/><polygon points="1214.8,206.2 1213.3,207.5 1209.3,207.8 1208.7,204.1 1213.1,203.4" fill="#f0d0b4"/><polygon points="1192.5,195.5 1188.2,200.2 1183.6,199.6 1184.2,193.0 1188.9,191.7" fill="#ecc8aa"/><polygon points="1202.1,195.1 1198.2,198.5 1195.2,195.3 1199.8,192.4" fill="#d8a888"/><polygon points="1217.9,209.8 1215.5,210.7 1212.5,211.9 1210.2,209.7 1211.9,205.9 1216.1,205.4" fill="#f4dcc4"/><polygon points="1213.5,207.0 1209.6,210.3 1206.9,207.0 1211.0,203.6" fill="#ecc8aa"/><polygon points="1206.8,189.3 1205.3,191.3 1203.6,190.7 1202.4,189.5 1203.3,187.2 1205.1,187.6" fill="#f4dcc4"/><polygon points="1211.8,196.3 1211.2,198.1 1209.5,197.6 1209.3,195.6 1210.9,195.1" fill="#ecc8aa"/><polygon points="1227.2,179.8 1226.3,182.9 1222.1,182.5 1219.8,179.8 1222.6,176.4 1227.8,173.8" fill="#d8a888"/><polygon points="1205.4,206.9 1204.5,209.6 1202.5,209.8 1199.9,207.7 1201.9,204.9 1205.3,205.5" fill="#e8c2a0"/><polygon points="1201.3,185.4 1197.6,188.7 1193.9,188.6 1194.4,184.4 1197.5,183.7" fill="#f0d0b4"/><polygon points="1217.1,201.7 1213.5,205.8 1208.7,200.8 1212.9,197.3" fill="#f4dcc4"/><polygon points="1214.2,183.0 1212.7,185.2 1210.7,183.9 1210.9,181.1 1212.3,180.6" fill="#d8a888"/><polygon points="1200.6,190.8 1199.3,193.6 1197.2,192.0 1195.6,190.3 1196.7,187.9 1199.2,188.0" fill="#ecc8aa"/><polygon points="1198.9,217.3 1194.5,220.2 1192.0,217.0 1196.0,213.3" fill="#f0d0b4"/><polygon points="1197.0,191.9 1195.4,194.3 1191.6,191.6 1195.0,189.8" fill="#d8a888"/><polygon points="1196.7,223.2 1194.6,225.6 1191.8,226.2 1190.9,223.4 1192.8,221.5 1195.1,221.5" fill="#f4dcc4"/><polygon points="1186.6,205.0 1186.5,209.4 1182.2,209.3 1180.5,207.1 1181.2,202.1 1186.0,202.5" fill="#e8c2a0"/><polygon points="1212.0,187.5 1210.0,189.4 1208.9,189.9 1208.0,188.5 1208.7,186.8 1210.8,186.4" fill="#f4dcc4"/><polygon points="1201.4,197.8 1197.5,199.7 1192.9,199.2 1193.2,194.6 1198.7,193.7" fill="#f4dcc4"/><polygon points="1226.2,193.1 1221.5,195.2 1218.0,193.4 1216.9,188.3 1222.5,187.3" fill="#d8a888"/><polygon points="1219.3,190.4 1217.3,192.8 1214.9,192.5 1214.4,191.7 1215.2,188.7 1218.1,189.7" fill="#f4dcc4"/><polygon points="1193.9,194.7 1192.9,196.6 1190.7,195.8 1190.6,194.3 1193.0,193.0" fill="#e8c2a0"/><polygon points="1210.4,192.4 1207.5,195.3 1205.8,194.9 1204.4,192.2 1205.4,189.7 1209.1,189.4" fill="#f4dcc4"/><polygon points="1210.5,193.8 1208.0,195.5 1206.5,194.4 1208.0,191.7" fill="#f0d0b4"/><polygon points="1211.1,174.9 1209.6,178.9 1206.4,176.8 1205.4,174.1 1208.9,173.0" fill="#dcb090"/><polygon points="1206.8,209.1 1202.2,211.3 1199.4,207.9 1202.9,205.4" fill="#d8a888"/><polygon points="1205.8,224.5 1204.1,228.7 1200.7,226.4 1203.0,221.8" fill="#ecc8aa"/><polygon points="1217.3,215.3 1213.2,218.6 1209.4,214.8 1212.6,209.9" fill="#f4dcc4"/><polygon points="1199.7,205.7 1198.4,206.9 1195.7,207.7 1195.0,205.4 1195.9,203.5 1198.2,203.7" fill="#e8c2a0"/><polygon points="1208.1,199.8 1205.0,204.4 1201.6,203.9 1199.4,200.1 1202.3,195.1 1206.8,197.0" fill="#dcb090"/><polygon points="1201.9,195.1 1201.4,198.7 1198.4,198.4 1195.9,195.6 1197.6,193.1 1200.3,192.7" fill="#f4dcc4"/><polygon points="1214.6,192.9 1210.7,198.3 1207.0,194.3 1211.8,189.4" fill="#ecc8aa"/><polygon points="1220.3,183.5 1219.4,186.5 1216.9,185.6 1217.0,181.9 1218.5,182.6" fill="#ecc8aa"/><polygon points="1206.4,200.2 1203.1,203.3 1200.1,204.9 1196.3,199.7 1198.8,197.3 1202.0,196.4" fill="#f0d0b4"/><polygon points="1202.3,212.5 1200.9,213.8 1198.9,214.0 1197.9,212.1 1199.0,211.0 1200.6,210.9" fill="#dcb090"/><polygon points="1201.8,213.5 1200.6,217.8 1197.7,217.4 1195.5,215.0 1196.0,211.4 1199.4,211.6" fill="#f4dcc4"/><polygon points="1209.0,194.5 1207.5,196.4 1205.9,196.2 1204.5,194.6 1205.2,190.9 1207.9,192.4" fill="#dcb090"/><polygon points="1210.1,211.9 1207.3,215.9 1202.0,214.9 1202.9,210.3 1207.2,209.3" fill="#dcb090"/><polygon points="1201.4,197.2 1199.9,198.1 1198.1,198.5 1197.6,196.7 1198.0,194.9 1200.4,194.9" fill="#e8c2a0"/><polygon points="1218.4,199.6 1217.1,202.0 1214.1,201.9 1213.2,198.8 1217.2,198.2" fill="#f0d0b4"/><polygon points="1205.8,218.5 1204.0,220.5 1200.3,222.3 1199.1,218.5 1201.5,216.0 1203.1,216.3" fill="#f4dcc4"/><polygon points="1218.6,203.5 1217.2,205.1 1215.3,205.3 1213.3,204.4 1215.0,202.0 1217.3,201.1" fill="#f4dcc4"/><polygon points="1204.0,207.8 1202.2,209.6 1200.3,208.7 1200.1,206.6 1202.5,205.3" fill="#dcb090"/><polygon points="1210.4,196.4 1209.3,199.1 1207.3,198.4 1206.9,195.5 1209.6,194.2" fill="#d8a888"/><polygon points="1194.9,221.5 1191.8,223.5 1189.5,220.8 1191.6,218.5" fill="#ecc8aa"/><polygon points="1202.2,198.3 1200.3,200.5 1197.8,198.1 1199.4,196.2" fill="#f0d0b4"/><polygon points="1207.7,191.9 1204.1,195.1 1200.5,194.6 1199.9,190.0 1201.5,187.9 1205.4,186.2" fill="#e8c2a0"/><polygon points="1206.5,192.5 1204.8,194.4 1202.9,194.3 1203.1,190.9 1205.2,190.9" fill="#dcb090"/><polygon points="1212.1,204.9 1211.1,207.0 1209.1,206.4 1208.6,203.6 1210.4,203.8" fill="#dcb090"/><polygon points="1219.3,198.4 1218.9,200.5 1216.5,200.0 1216.2,198.5 1216.9,196.4 1218.1,197.1" fill="#dcb090"/><polygon points="1223.6,200.8 1222.7,204.8 1216.7,204.0 1216.2,198.1 1222.1,196.6" fill="#ecc8aa"/></g>
</g>
<text x="1283.4" y="192.9" font-size="7.5" fill="#505064" textLength="39.8" lengthAdjust="spacingAndGlyphs" >‫کراک ایرانی :‬</text>
<text x="1205.8" y="229.8" font-size="5" fill="#6e6e78" textLength="35.1" lengthAdjust="spacingAndGlyphs" >‫به همراه پودر های شیمیایی‬</text>
<text x="1176.2" y="238.2" font-size="5" fill="#6e6e78" textLength="87.8" lengthAdjust="spacingAndGlyphs" >‫روش مصرف اغلب تدخینی و در درجه بعد تزریقی‬</text>
<text x="1176" y="252.6" font-size="5" fill="#c0392b" textLength="40" lengthAdjust="spacingAndGlyphs" >‫کراک ، هروئین ، کوکائین‬</text>
<text x="133" y="382.9" font-size="7.5" fill="#c0392b" textLength="37" lengthAdjust="spacingAndGlyphs" >‫طرق مصرف‬</text>
<path d="M75.40,398.40 L78.80,400.20 L75.40,402.00 L76.40,400.20 Z" fill="#111" />
<text x="81" y="402.0" font-size="5" fill="#6e6e78" textLength="146" lengthAdjust="spacingAndGlyphs" >‫تدخین ( این ماده را در داخل لامپهای سوختگی ، زرورق، قاشقهای نوشابه و یا ظروف‬</text>
<text x="78.4" y="407.8" font-size="5" fill="#6e6e78" textLength="98.0" lengthAdjust="spacingAndGlyphs" >‫های شیشه ای میریزند و انرا حرارت میدهند تا دود کنند )‬</text>
<path d="M75.40,412.00 L78.80,413.80 L75.40,415.60 L76.40,413.80 Z" fill="#111" />
<text x="81" y="415.6" font-size="5" fill="#6e6e78" textLength="14" lengthAdjust="spacingAndGlyphs" >‫استنشاق‬</text>
<path d="M75.40,427.00 L78.80,428.80 L75.40,430.60 L76.40,428.80 Z" fill="#111" />
<path d="M75.40,435.30 L78.80,437.10 L75.40,438.90 L76.40,437.10 Z" fill="#111" />
<rect x="82.7" y="430.1" width="83.2" height="63.80000000000001" fill="#dcd8f0" />
<rect x="90.4" y="444.9" width="65.1" height="21.1" fill="#f2f2f4" />
<rect x="90.4" y="466" width="65.1" height="25" fill="#3c4048" />
<circle cx="110" cy="436" r="2.4" fill="#8a7a40"/>
<rect x="99" y="440" width="24" height="1" fill="#9090a8" />
<ellipse cx="96" cy="476" rx="4" ry="3" fill="#a0a8b0"/>
<line x1="99" y1="476" x2="149" y2="468" stroke="#c0c8d0" stroke-width="1" />
<rect x="129" y="471" width="8" height="3.5" fill="#4050a0" />
<path d="M112,484 L123,480 L126,485 L115,489 Z" fill="#c8a0c8" />
<clipPath id="cman"><rect x="169" y="420" width="30" height="37.8" rx="4"/></clipPath>
<g clip-path="url(#cman)"><rect x="169" y="420" width="30" height="37.8" fill="#c8c8cc"/><g filter="url(#bl)"><ellipse cx="176" cy="428" rx="10" ry="8" fill="#d0a890"/><ellipse cx="189" cy="424" rx="14" ry="6" fill="#2a2624"/><ellipse cx="186" cy="435" rx="7" ry="3" fill="#101010"/><ellipse cx="181" cy="447" rx="12" ry="7" fill="#e0c0b0"/><rect x="184" y="445" width="16" height="14" fill="#303034"/><line x1="189" y1="458" x2="199" y2="448" stroke="#e0e0e0" stroke-width="1.2"/></g></g>
<text x="348" y="382.5" font-size="7.5" fill="#c0392b" textLength="45" lengthAdjust="spacingAndGlyphs" >‫شیشه  متامفتامین‬</text>
<path d="M295.80,398.40 L299.20,400.20 L295.80,402.00 L296.80,400.20 Z" fill="#111" />
<text x="302" y="402.0" font-size="5" fill="#6e6e78" textLength="144" lengthAdjust="spacingAndGlyphs" >‫مت آمفتامین یک ماده محرک بسیار اعتیاد آور است که سیستم اعصاب مرکزی یعنی مغز و‬</text>
<text x="302" y="407.8" font-size="5" fill="#6e6e78" textLength="47" lengthAdjust="spacingAndGlyphs" >‫نخاع را شدیدا متاثر می کند‬</text>
<path d="M295.80,411.20 L299.20,413.00 L295.80,414.80 L296.80,413.00 Z" fill="#111" />
<text x="302" y="414.8" font-size="5" fill="#6e6e78" textLength="144" lengthAdjust="spacingAndGlyphs" >‫شکل ظاهری آن به صورت دانه های بلوری و شفاف است که بو ندارد و مزه آن تلخ است‬</text>
<text x="302" y="419.8" font-size="5" fill="#6e6e78" textLength="144" lengthAdjust="spacingAndGlyphs" >‫وبه سادگی در آب یا مشروبات الکلی حل میشود . به لحاظ شیمیایی ، ساختار آن شباهت‬</text>
<text x="302" y="425.4" font-size="5" fill="#6e6e78" textLength="144" lengthAdjust="spacingAndGlyphs" >‫بسیاری به آمفتامین دارد اما اثرات آن بر سیستم اعصاب مرکزی بسیار قوی تر است‬</text>
<text x="302" y="431.0" font-size="5" fill="#6e6e78" textLength="133" lengthAdjust="spacingAndGlyphs" >‫ومانند آمفتامین ها باعث فعالیت و تحرک ، کاهش اشتها و احساس شادابی می شود .‬</text>
<text x="297.4" y="438.4" font-size="5" fill="#c0392b" textLength="9.3" lengthAdjust="spacingAndGlyphs" >‫نکته :‬</text>
<path d="M295.80,442.20 L299.20,444.00 L295.80,445.80 L296.80,444.00 Z" fill="#111" />
<text x="302" y="445.8" font-size="5" fill="#6e6e78" textLength="144" lengthAdjust="spacingAndGlyphs" >‫آثار این ماده بین 6 تا 8 ساعت طول می کشد . بعد از سرخوشی اولیه ، حالت تحریک‬</text>
<text x="302" y="451.3" font-size="5" fill="#6e6e78" textLength="85" lengthAdjust="spacingAndGlyphs" >‫پذیری پیش می آید یعنی مصرف مجدد را اغاز نماید‬</text>
<text x="553" y="379.24" font-size="14" fill="#c00000" textLength="97.5" lengthAdjust="spacingAndGlyphs" font-weight="bold" >‫شیشه   متامفتامین‬</text>
<clipPath id="cl3"><rect x="519.8" y="393" width="69.2" height="44.599999999999994" rx="0"/></clipPath><g clip-path="url(#cl3)">
<rect x="519.8" y="393" width="69.2" height="44.599999999999994" fill="#6a8ab0" />
<g filter="url(#bl)"><rect x="519.8" y="393" width="69.2" height="14" fill="#4a78b0"/><path d="M527.8,437.6 C529.8,415 545.8,399 571.8,401 L589.0,407 L589.0,437.6 Z" fill="#b4b8b0"/><ellipse cx="549.8" cy="409" rx="14" ry="7" fill="#dce4e8"/><ellipse cx="571.8" cy="421" rx="12" ry="10" fill="#a0a49c"/></g>
<rect x="519.8" y="428.6" width="69.2" height="9" fill="#607080" opacity="0.45"/>
<text x="521.3" y="435.6" font-size="8" fill="#ffffff" textLength="67.2" lengthAdjust="spacingAndGlyphs" font-weight="bold" >METHAMPHETAMINE</text>
</g>
<clipPath id="cl4"><rect x="610" y="390" width="64" height="56" rx="0"/></clipPath><g clip-path="url(#cl4)">
<rect x="610" y="390" width="64" height="56" fill="#262626" />
<g filter="url(#bl)"><ellipse cx="642" cy="416" rx="27" ry="21" fill="#707070"/><ellipse cx="638" cy="412" rx="16" ry="10" fill="#b8b8b8"/></g>
<g><polygon points="620.2,402.0 630.6,400.1 624.5,396.4" fill="#a8a8a8" opacity="0.8"/><polygon points="654.9,422.9 660.1,412.5 652.8,415.3" fill="#dcdcdc" opacity="0.8"/><polygon points="653.5,427.6 654.5,420.9 651.0,423.8" fill="#a8a8a8" opacity="0.8"/><polygon points="645.4,437.3 638.8,433.0 640.2,438.1" fill="#e8e8e8" opacity="0.8"/><polygon points="654.5,436.5 656.6,431.0 653.0,432.8" fill="#dcdcdc" opacity="0.8"/><polygon points="665.5,441.2 669.3,437.9 665.9,437.9" fill="#dcdcdc" opacity="0.8"/><polygon points="649.4,413.7 650.8,402.1 644.9,407.2" fill="#dcdcdc" opacity="0.8"/><polygon points="654.2,445.0 660.6,444.3 657.1,441.8" fill="#e8e8e8" opacity="0.8"/><polygon points="640.7,427.7 635.2,425.0 636.8,428.8" fill="#f4f4f4" opacity="0.8"/><polygon points="627.9,439.3 630.6,430.6 625.3,433.8" fill="#c8c8c8" opacity="0.8"/><polygon points="652.0,422.8 656.1,416.9 651.5,418.0" fill="#dcdcdc" opacity="0.8"/><polygon points="617.5,417.7 622.9,417.3 620.0,415.0" fill="#f4f4f4" opacity="0.8"/><polygon points="654.0,415.4 655.2,407.7 651.1,411.0" fill="#e8e8e8" opacity="0.8"/><polygon points="632.2,427.6 627.2,426.9 629.3,429.5" fill="#dcdcdc" opacity="0.8"/><polygon points="619.1,395.8 615.0,391.7 615.2,395.6" fill="#e8e8e8" opacity="0.8"/><polygon points="631.3,427.6 637.9,422.0 632.1,421.8" fill="#f4f4f4" opacity="0.8"/><polygon points="623.5,406.8 619.0,400.7 618.5,405.8" fill="#e8e8e8" opacity="0.8"/><polygon points="646.5,416.9 649.1,409.9 644.7,412.3" fill="#dcdcdc" opacity="0.8"/><polygon points="627.3,442.5 622.4,435.2 621.6,441.0" fill="#c8c8c8" opacity="0.8"/><polygon points="630.3,439.5 636.3,432.3 630.0,433.2" fill="#c8c8c8" opacity="0.8"/><polygon points="647.7,415.2 653.0,414.9 650.3,412.6" fill="#a8a8a8" opacity="0.8"/><polygon points="647.6,418.2 642.8,409.3 641.1,415.9" fill="#c8c8c8" opacity="0.8"/><polygon points="625.2,419.4 630.4,418.0 627.2,416.4" fill="#f4f4f4" opacity="0.8"/><polygon points="642.8,404.9 649.3,404.5 645.9,401.8" fill="#a8a8a8" opacity="0.8"/><polygon points="665.9,411.5 655.9,408.1 659.3,414.3" fill="#e8e8e8" opacity="0.8"/><polygon points="642.2,420.0 635.0,416.6 637.0,421.5" fill="#a8a8a8" opacity="0.8"/><polygon points="665.2,392.3 664.9,384.2 661.4,388.4" fill="#c8c8c8" opacity="0.8"/><polygon points="633.9,418.3 626.9,414.8 628.9,419.7" fill="#e8e8e8" opacity="0.8"/><polygon points="646.5,402.2 652.7,400.9 649.0,398.8" fill="#c8c8c8" opacity="0.8"/><polygon points="648.3,432.4 649.6,423.9 645.1,427.6" fill="#a8a8a8" opacity="0.8"/><polygon points="623.1,436.0 629.1,427.5 622.2,429.1" fill="#f4f4f4" opacity="0.8"/><polygon points="646.0,407.3 639.7,399.7 639.4,406.4" fill="#e8e8e8" opacity="0.8"/><polygon points="633.3,450.4 643.3,449.0 637.7,445.3" fill="#c8c8c8" opacity="0.8"/><polygon points="630.7,404.6 631.4,399.6 628.8,401.7" fill="#c8c8c8" opacity="0.8"/><polygon points="636.8,427.5 636.8,420.4 633.7,424.0" fill="#c8c8c8" opacity="0.8"/><polygon points="626.0,432.3 634.7,427.1 628.0,425.7" fill="#c8c8c8" opacity="0.8"/><polygon points="650.5,417.1 648.8,406.2 644.7,412.4" fill="#c8c8c8" opacity="0.8"/><polygon points="662.2,413.4 654.6,409.0 656.4,414.6" fill="#c8c8c8" opacity="0.8"/><polygon points="653.7,413.6 659.9,406.0 653.4,407.0" fill="#e8e8e8" opacity="0.8"/><polygon points="651.3,438.0 655.8,430.2 650.0,432.1" fill="#e8e8e8" opacity="0.8"/><polygon points="639.8,434.2 632.5,425.8 632.5,433.3" fill="#f4f4f4" opacity="0.8"/><polygon points="652.2,433.1 644.3,428.1 646.0,434.2" fill="#dcdcdc" opacity="0.8"/><polygon points="642.3,415.3 636.1,409.9 636.8,415.4" fill="#f4f4f4" opacity="0.8"/><polygon points="647.6,417.3 647.0,405.6 642.0,411.7" fill="#a8a8a8" opacity="0.8"/><polygon points="656.0,421.9 658.7,414.7 654.1,417.1" fill="#a8a8a8" opacity="0.8"/><polygon points="650.1,437.4 646.6,430.6 645.3,435.6" fill="#c8c8c8" opacity="0.8"/><polygon points="658.7,400.6 660.2,390.9 655.1,395.1" fill="#f4f4f4" opacity="0.8"/><polygon points="630.5,415.5 630.8,408.4 627.5,411.9" fill="#a8a8a8" opacity="0.8"/><polygon points="639.3,429.1 637.7,423.4 635.9,427.0" fill="#a8a8a8" opacity="0.8"/><polygon points="632.6,408.8 634.4,403.1 631.0,405.2" fill="#a8a8a8" opacity="0.8"/><polygon points="635.6,417.2 629.9,415.5 632.0,418.9" fill="#f4f4f4" opacity="0.8"/><polygon points="632.1,428.3 633.5,416.9 627.7,422.0" fill="#c8c8c8" opacity="0.8"/><polygon points="622.4,400.1 620.8,392.6 618.3,397.1" fill="#dcdcdc" opacity="0.8"/><polygon points="627.7,420.4 624.1,411.1 621.7,417.4" fill="#dcdcdc" opacity="0.8"/><polygon points="633.1,415.7 632.9,403.9 627.7,409.9" fill="#e8e8e8" opacity="0.8"/><polygon points="672.2,419.6 679.2,418.1 675.0,415.7" fill="#dcdcdc" opacity="0.8"/><polygon points="635.7,420.7 634.1,411.5 630.8,416.9" fill="#c8c8c8" opacity="0.8"/><polygon points="649.6,420.7 649.1,413.0 645.9,417.1" fill="#a8a8a8" opacity="0.8"/><polygon points="640.8,447.4 633.3,440.1 633.8,447.1" fill="#c8c8c8" opacity="0.8"/><polygon points="654.6,402.3 654.4,395.3 651.4,398.9" fill="#e8e8e8" opacity="0.8"/></g>
<rect x="610" y="442" width="64" height="4" fill="#101010" />
</g>
<clipPath id="cl5"><rect x="520" y="450" width="67" height="40.80000000000001" rx="0"/></clipPath><g clip-path="url(#cl5)">
<rect x="520" y="450" width="67" height="40.80000000000001" fill="#6a3a14" />
<g filter="url(#bl)"><rect x="520" y="450" width="67" height="12" fill="#a06830"/><rect x="570" y="450" width="17" height="22" fill="#2a2010"/><ellipse cx="574" cy="458" rx="9" ry="6" fill="#c8a878"/><ellipse cx="550" cy="479" rx="30" ry="11" fill="#f0ece8"/><ellipse cx="544" cy="476" rx="14" ry="7" fill="#ffffff"/></g>
</g>
<clipPath id="cl6"><rect x="612" y="448" width="59" height="45" rx="0"/></clipPath><g clip-path="url(#cl6)">
<rect x="612" y="448" width="59" height="45" fill="#ffffff" />
<g filter="url(#bl)"><path d="M616,454 L632,450 L652,449 L668,452 L670,470 L667,491 L642,493 L618,490 L613,472 Z" fill="#1c3242"/></g>
<polygon points="632,455.5 635.6,460 632,464.5 628.4,460" fill="#d8dcdc"/>
<polygon points="656,463 659.2,467 656,471 652.8,467" fill="#d8dcdc"/>
<polygon points="636,471.2 638.24,474 636,476.8 633.76,474" fill="#d8dcdc"/>
<polygon points="645,474 650.6,481 645,488 639.4,481" fill="#d8dcdc"/>
</g>
<text x="741" y="374.42" font-size="7" fill="#2c2c50" textLength="153.4" lengthAdjust="spacingAndGlyphs" font-weight="bold" >‫نوع ماده: داروهای محرک آمفتامین ها و شبه آمفتامین ها‬</text>
<text x="786" y="384.22" font-size="7" fill="#2c2c50" textLength="63" lengthAdjust="spacingAndGlyphs" font-weight="bold" >‫(معروف به مواد طراح)‬</text>
<clipPath id="cl7"><rect x="739" y="394" width="55" height="64.8" rx="0"/></clipPath><g clip-path="url(#cl7)">
<rect x="739" y="394" width="55" height="64.8" fill="#d8d8dc" />
<g transform="translate(743,404) rotate(-20)"><rect x="-4.5" y="-13" width="9" height="14" rx="4.5" fill="#2a1618"/><rect x="-4.5" y="-1" width="9" height="14" rx="4.5" fill="#d86a28"/><rect x="-2.5" y="-10" width="2" height="20" rx="1" fill="#ffffff" opacity="0.25"/></g>
<g transform="translate(759,400) rotate(-30)"><rect x="-4.5" y="-13" width="9" height="14" rx="4.5" fill="#d86a28"/><rect x="-4.5" y="-1" width="9" height="14" rx="4.5" fill="#2a1618"/><rect x="-2.5" y="-10" width="2" height="20" rx="1" fill="#ffffff" opacity="0.25"/></g>
<g transform="translate(777,404) rotate(-35)"><rect x="-4.5" y="-13" width="9" height="14" rx="4.5" fill="#2a1618"/><rect x="-4.5" y="-1" width="9" height="14" rx="4.5" fill="#d86a28"/><rect x="-2.5" y="-10" width="2" height="20" rx="1" fill="#ffffff" opacity="0.25"/></g>
<g transform="translate(791,416) rotate(-40)"><rect x="-4.5" y="-13" width="9" height="14" rx="4.5" fill="#d86a28"/><rect x="-4.5" y="-1" width="9" height="14" rx="4.5" fill="#2a1618"/><rect x="-2.5" y="-10" width="2" height="20" rx="1" fill="#ffffff" opacity="0.25"/></g>
<g transform="translate(747,432) rotate(-15)"><rect x="-4.5" y="-13" width="9" height="14" rx="4.5" fill="#d86a28"/><rect x="-4.5" y="-1" width="9" height="14" rx="4.5" fill="#2a1618"/><rect x="-2.5" y="-10" width="2" height="20" rx="1" fill="#ffffff" opacity="0.25"/></g>
<g transform="translate(763,424) rotate(-25)"><rect x="-4.5" y="-13" width="9" height="14" rx="4.5" fill="#2a1618"/><rect x="-4.5" y="-1" width="9" height="14" rx="4.5" fill="#d86a28"/><rect x="-2.5" y="-10" width="2" height="20" rx="1" fill="#ffffff" opacity="0.25"/></g>
<g transform="translate(779,434) rotate(-35)"><rect x="-4.5" y="-13" width="9" height="14" rx="4.5" fill="#2a1618"/><rect x="-4.5" y="-1" width="9" height="14" rx="4.5" fill="#d86a28"/><rect x="-2.5" y="-10" width="2" height="20" rx="1" fill="#ffffff" opacity="0.25"/></g>
<g transform="translate(749,456) rotate(-10)"><rect x="-4.5" y="-13" width="9" height="14" rx="4.5" fill="#2a1618"/><rect x="-4.5" y="-1" width="9" height="14" rx="4.5" fill="#d86a28"/><rect x="-2.5" y="-10" width="2" height="20" rx="1" fill="#ffffff" opacity="0.25"/></g>
<g transform="translate(767,450) rotate(-25)"><rect x="-4.5" y="-13" width="9" height="14" rx="4.5" fill="#d86a28"/><rect x="-4.5" y="-1" width="9" height="14" rx="4.5" fill="#2a1618"/><rect x="-2.5" y="-10" width="2" height="20" rx="1" fill="#ffffff" opacity="0.25"/></g>
<g transform="translate(785,456) rotate(-30)"><rect x="-4.5" y="-13" width="9" height="14" rx="4.5" fill="#2a1618"/><rect x="-4.5" y="-1" width="9" height="14" rx="4.5" fill="#d86a28"/><rect x="-2.5" y="-10" width="2" height="20" rx="1" fill="#ffffff" opacity="0.25"/></g>
<text x="749" y="456.8" font-size="6" fill="#f0f0f0" textLength="43" lengthAdjust="spacingAndGlyphs" font-weight="bold" >AMPHETAMINES</text>
</g>
<text x="797" y="407.27" font-size="6.3" fill="#111111" textLength="52" lengthAdjust="spacingAndGlyphs" font-weight="bold" >‫منشاء: مواد صناعی .‬</text>
<text x="797" y="416.67" font-size="6.3" fill="#111111" textLength="72.4" lengthAdjust="spacingAndGlyphs" font-weight="bold" >‫انواع: مشتق آمفتامین، مت .‬</text>
<text x="797" y="425.87" font-size="6.3" fill="#111111" textLength="92" lengthAdjust="spacingAndGlyphs" font-weight="bold" >‫آمفتامین(کریستال)، متیل فنیدیت ومیدین‬</text>
<text x="797" y="436.07" font-size="6.3" fill="#111111" textLength="92" lengthAdjust="spacingAndGlyphs" font-weight="bold" >)معروف به MDMAشی اکسی آمفتامین(</text>
<text x="802" y="444.27" font-size="6.3" fill="#111111" textLength="84" lengthAdjust="spacingAndGlyphs" font-weight="bold" >( معروف به MDEAاکستاسی یا آدم،</text>
<text x="801" y="450.87" font-size="6.3" fill="#111111" textLength="84" lengthAdjust="spacingAndGlyphs" font-weight="bold" >(متیل آمفتامین)MMDA وDOMحوا!)</text>
<text x="797" y="471.27" font-size="6.3" fill="#111111" textLength="76" lengthAdjust="spacingAndGlyphs" font-weight="bold" >‫نحوه مصرف: خوردن و تزریق •‬</text>
<clipPath id="cl8"><rect x="958.1" y="363.9" width="52.699999999999996" height="70.8" rx="0"/></clipPath><g clip-path="url(#cl8)">
<rect x="958.1" y="363.9" width="52.699999999999996" height="70.8" fill="url(#gvial)" />
<rect x="959.1" y="364.9" width="50.699999999999996" height="10" fill="#ece4dc" />
<text x="963.1" y="371.9" font-size="6" fill="#2a2a2a" textLength="42.699999999999996" lengthAdjust="spacingAndGlyphs" font-weight="bold" >آمپول بری نور انجکشن</text>
<rect x="961.1" y="391.9" width="20" height="10" fill="#dcd0cc" stroke="#604848" stroke-width="0.6" />
<rect x="986.1" y="391.9" width="20" height="10" fill="#dcd0cc" stroke="#604848" stroke-width="0.6" />
<g filter="url(#bl)"><circle cx="976.1" cy="385.9" r="2.2" fill="#4aa0c8"/><circle cx="982.1" cy="383.9" r="2.2" fill="#4aa0c8"/><circle cx="988.1" cy="381.9" r="2.2" fill="#4aa0c8"/><circle cx="994.1" cy="379.9" r="2.2" fill="#4aa0c8"/><circle cx="1000.1" cy="377.9" r="2.2" fill="#4aa0c8"/><rect x="964.1" y="405.9" width="5" height="14" fill="#c08040"/><rect x="970.1" y="409.9" width="5" height="14" fill="#c0a040"/><rect x="974.1" y="415.9" width="6" height="14" fill="#50a0b8"/><rect x="980.1" y="407.9" width="5" height="14" fill="#304080"/><rect x="986.1" y="403.9" width="5" height="14" fill="#c08040"/><rect x="992.1" y="413.9" width="4" height="12" fill="#e8c050"/><rect x="998.1" y="411.9" width="4" height="12" fill="#e8c050"/></g>
</g>
<clipPath id="cl9"><rect x="955.9" y="435.6" width="68.19999999999999" height="61.099999999999994" rx="0"/></clipPath><g clip-path="url(#cl9)">
<rect x="955.9" y="435.6" width="68.19999999999999" height="61.099999999999994" fill="url(#gbg56)" />
<g filter="url(#bl)"><rect x="983" y="453" width="12" height="4" fill="#e0a040"/><rect x="983" y="457" width="12" height="4" fill="#a0b8c8"/><rect x="982" y="461" width="14" height="15" rx="2" fill="#b8901c"/></g>
<rect x="955.9" y="485.5" width="68.19999999999999" height="3" fill="#141414" />
</g>
<text x="1027.4" y="371.4" font-size="5" fill="#6e6e78" textLength="53.6" lengthAdjust="spacingAndGlyphs" >‫قاچاقچیان دارو در ایران اقدام به‬</text>
<text x="1021" y="379.8" font-size="5" fill="#6e6e78" textLength="69" lengthAdjust="spacingAndGlyphs" >‫تهیه آمپولی به نام نورجیزک (نمجیزک،‬</text>
<text x="1027" y="384.8" font-size="5" fill="#6e6e78" textLength="63" lengthAdjust="spacingAndGlyphs" >‫نوتوجیزک، نی ای جیزک، کی جیزک،‬</text>
<text x="1027" y="389.8" font-size="5" fill="#6e6e78" textLength="74" lengthAdjust="spacingAndGlyphs" >‫سورجیزک یا فلورو و شهروی) کرده اند که این‬</text>
<text x="1027" y="395.3" font-size="5" fill="#6e6e78" textLength="76" lengthAdjust="spacingAndGlyphs" >‫آمپول ترکیبی از هروئین وآستاروپ(کوکوئون)‬</text>
<text x="1027" y="400.8" font-size="5" fill="#6e6e78" textLength="77" lengthAdjust="spacingAndGlyphs" >‫ومسکن و داروهای ومفتامین نوهم و... سایر‬</text>
<text x="1027" y="406.9" font-size="5" fill="#6e6e78" textLength="32" lengthAdjust="spacingAndGlyphs" >‫مواد غیر مجاز است.‬</text>
<path d="M1021.80,367.80 L1025.20,369.60 L1021.80,371.40 L1022.80,369.60 Z" fill="#1a1a60" />
<path d="M1021.80,416.80 L1025.20,418.60 L1021.80,420.40 L1022.80,418.60 Z" fill="#1a1a60" />
<text x="1027.4" y="420.4" font-size="5" fill="#6e6e78" textLength="49.0" lengthAdjust="spacingAndGlyphs" >‫مهمترین مشکلی که استفاده از‬</text>
<text x="1022" y="428.6" font-size="5" fill="#6e6e78" textLength="55" lengthAdjust="spacingAndGlyphs" >‫استروئیدها ایجاد میکند اختلال در‬</text>
<text x="1022" y="435.6" font-size="5" fill="#6e6e78" textLength="40.6" lengthAdjust="spacingAndGlyphs" >‫عملکرد غدد آدرنال است‬</text>
<text x="1207.6" y="374.0" font-size="7.5" fill="#505064" textLength="95.2" lengthAdjust="spacingAndGlyphs" >‫خانواده نورجیزک ( هروبین مایع ):‬</text>
<path d="M1191.60,385.20 L1195.00,387.00 L1191.60,388.80 L1192.60,387.00 Z" fill="#1a1a60" />
<text x="1204.8" y="388.8" font-size="5" fill="#6e6e78" textLength="123.0" lengthAdjust="spacingAndGlyphs" >‫حدود 4 سال قبل موادی که به نام های نمجیزک، نیجیزک، نورجیزک ...‬</text>
<text x="1204.8" y="394.9" font-size="5" fill="#6e6e78" textLength="116.5" lengthAdjust="spacingAndGlyphs" >‫معروفند که همگی داروهای تجاری اروپایی به نام بوپره نورفین بودند ،‬</text>
<text x="1204.8" y="400.8" font-size="5" fill="#6e6e78" textLength="84.2" lengthAdjust="spacingAndGlyphs" >‫بصورت قاچاق از طریق پاکستان وارد ایران شد.‬</text>
<clipPath id="cl10"><rect x="1178" y="428.8" width="52.7" height="67.50000000000001" rx="0"/></clipPath><g clip-path="url(#cl10)">
<rect x="1178" y="428.8" width="52.7" height="67.50000000000001" fill="url(#gsep)" />
<g filter="url(#bl)"><ellipse cx="1218" cy="438.8" rx="14" ry="7" fill="#b89050"/><ellipse cx="1198" cy="486.8" rx="22" ry="10" fill="#c8a058"/><rect x="1195" y="458.8" width="9" height="22" fill="#e8d8b0" transform="rotate(20 1199 468.8)"/><rect x="1202" y="440.8" width="5" height="18" fill="#7a6038" transform="rotate(20 1204 448.8)"/><ellipse cx="1223" cy="473.8" rx="8" ry="22" fill="#b89050"/></g>
</g>
<clipPath id="cl11"><rect x="1233.1" y="437.1" width="104.9" height="59.599999999999994" rx="0"/></clipPath><g clip-path="url(#cl11)">
<rect x="1233.1" y="437.1" width="104.9" height="59.599999999999994" fill="url(#gcream)" />
<rect x="1235.1" y="441.1" width="28" height="6" fill="#f2ecd8" stroke="#606050" stroke-width="0.5" />
<rect x="1266.1" y="440.1" width="26" height="6" fill="#f2ecd8" stroke="#606050" stroke-width="0.5" />
<rect x="1295.1" y="441.1" width="28" height="6" fill="#f2ecd8" stroke="#606050" stroke-width="0.5" />
<rect x="1241.1" y="464.1" width="27" height="6" fill="#f2ecd8" stroke="#606050" stroke-width="0.5" />
<rect x="1271.1" y="465.1" width="30" height="6" fill="#f2ecd8" stroke="#606050" stroke-width="0.5" />
<rect x="1305.1" y="466.1" width="31" height="6" fill="#f2ecd8" stroke="#606050" stroke-width="0.5" />
<g filter="url(#bl)"><rect x="1237.1" y="451.1" width="18" height="3" fill="#807060" transform="rotate(25 1237.1 451.1)"/><rect x="1243.1" y="450.1" width="18" height="3" fill="#a09080" transform="rotate(25 1243.1 450.1)"/><rect x="1263.1" y="451.1" width="20" height="3" fill="#907060" transform="rotate(25 1263.1 451.1)"/><rect x="1269.1" y="449.1" width="18" height="3" fill="#60a070" transform="rotate(25 1269.1 449.1)"/><rect x="1289.1" y="450.1" width="20" height="3" fill="#d0b0a0" transform="rotate(25 1289.1 450.1)"/><rect x="1303.1" y="450.1" width="20" height="3" fill="#d09890" transform="rotate(25 1303.1 450.1)"/><rect x="1319.1" y="449.1" width="14" height="3" fill="#e0c0b0" transform="rotate(25 1319.1 449.1)"/><rect x="1237.1" y="477.1" width="18" height="3" fill="#c06070" transform="rotate(25 1237.1 477.1)"/><rect x="1245.1" y="477.1" width="18" height="3" fill="#a08070" transform="rotate(25 1245.1 477.1)"/><rect x="1273.1" y="479.1" width="18" height="3" fill="#d06070" transform="rotate(25 1273.1 479.1)"/><rect x="1281.1" y="477.1" width="16" height="3" fill="#e04050" transform="rotate(25 1281.1 477.1)"/><rect x="1315.1" y="479.1" width="16" height="3" fill="#c06070" transform="rotate(25 1315.1 479.1)"/><rect x="1323.1" y="477.1" width="12" height="3" fill="#d08080" transform="rotate(25 1323.1 477.1)"/></g>
</g>
<text x="131.2" y="615.62" font-size="17" fill="#c00000" textLength="61.1" lengthAdjust="spacingAndGlyphs" font-weight="bold" >‫اکستاسی‬</text>
<text x="292.8" y="569.2" font-size="7.5" fill="#222222" textLength="75.8" lengthAdjust="spacingAndGlyphs" >‫کاهش وزن بدون علت•‬</text>
<clipPath id="cl12"><rect x="324.2" y="591" width="43.8" height="57.8" rx="0"/></clipPath><g clip-path="url(#cl12)">
<rect x="324.2" y="591" width="43.8" height="57.8" fill="#e8e0c4" />
<g filter="url(#bl)"><path d="M326.39,648.8 C322.01,619.9 326.39,593.89 346.09999999999997,592.734 C365.81,593.89 370.19,619.9 365.81,648.8 Z" fill="#b89a64"/><ellipse cx="346.09999999999997" cy="621.056" rx="11.826" ry="17.34" fill="#dcc6a0"/><ellipse cx="346.09999999999997" cy="617.01" rx="7.8839999999999995" ry="10.404" fill="#ecd8b8"/></g>
<g opacity="0.8"><ellipse cx="341.282" cy="615.276" rx="2.6279999999999997" ry="1.0403999999999998" fill="#3a2a20"/><ellipse cx="350.918" cy="615.276" rx="2.6279999999999997" ry="1.0403999999999998" fill="#3a2a20"/><ellipse cx="346.09999999999997" cy="629.148" rx="3.9419999999999997" ry="0.8092" fill="#6a4a3a"/></g>
<path d="M333.836,631.46 Q346.09999999999997,644.176 359.24,631.46" stroke="#1a1a1a" stroke-width="1.1" fill="none"/>
<rect x="324.2" y="644.176" width="43.8" height="4.624" fill="#4a8a90" />
</g>
<clipPath id="cl13"><rect x="388" y="591" width="45" height="58.7" rx="0"/></clipPath><g clip-path="url(#cl13)">
<rect x="388" y="591" width="45" height="58.7" fill="#ece2c8" />
<g filter="url(#bl)"><path d="M390.25,649.7 C385.75,620.35 390.25,593.935 410.5,592.761 C430.75,593.935 435.25,620.35 430.75,649.7 Z" fill="#cfb070"/><ellipse cx="410.5" cy="621.524" rx="12.15" ry="17.61" fill="#d8c0a0"/><ellipse cx="410.5" cy="617.415" rx="8.1" ry="10.566" fill="#e8d4b8"/></g>
<g opacity="0.8"><ellipse cx="405.55" cy="615.654" rx="2.6999999999999997" ry="1.0566" fill="#3a2a20"/><ellipse cx="415.45" cy="615.654" rx="2.6999999999999997" ry="1.0566" fill="#3a2a20"/><ellipse cx="410.5" cy="629.742" rx="4.05" ry="0.8218000000000001" fill="#6a4a3a"/></g>
<path d="M397.9,632.09 Q410.5,645.004 424.0,632.09" stroke="#1a1a1a" stroke-width="1.1" fill="none"/>
<rect x="388" y="645.004" width="45" height="4.696000000000001" fill="#3a7a90" />
</g>
<clipPath id="cl14"><rect x="523.3" y="555.4" width="73.5" height="99.3" rx="0"/></clipPath><g clip-path="url(#cl14)">
<rect x="523.3" y="555.4" width="73.5" height="99.3" fill="#8c8a8a" />
<g filter="url(#bl2)"><path d="M525.3,654.6999999999999 C523.3,595.4 529.3,561.4 560.3,560.4 C591.3,561.4 597.3,595.4 595.3,654.6999999999999 Z" fill="#3a2820"/><path d="M565.3,561.4 C585.3,567.4 595.3,589.4 593.3,617.4 L581.3,601.4 Z" fill="#9a7050"/><ellipse cx="559.3" cy="609.4" rx="24.255000000000003" ry="36.741" fill="#dca08a"/><ellipse cx="559.3" cy="599.4" rx="16.17" ry="19.86" fill="#ecbca4"/><rect x="543.3" y="641.4" width="32" height="16" fill="#d8a088"/></g>
<g opacity="0.85"><ellipse cx="549.76" cy="603.064" rx="4" ry="1.6" fill="#3a2820"/><ellipse cx="569.6049999999999" cy="603.064" rx="4" ry="1.6" fill="#3a2820"/><ellipse cx="560.05" cy="629.3785" rx="7" ry="1.3" fill="#a86a60"/><path d="M557.1099999999999,607.036 L555.64,618.952 L561.52,619.4485" stroke="#b88070" stroke-width="0.8" fill="none"/></g>
</g>
<clipPath id="cl15"><rect x="600" y="555.8" width="74" height="98.9" rx="0"/></clipPath><g clip-path="url(#cl15)">
<rect x="600" y="555.8" width="74" height="98.9" fill="#98a0b0" />
<g filter="url(#bl2)"><path d="M602,654.6999999999999 C600,595.8 604,557.8 640,557.8 C672,559.8 678,595.8 674,629.9749999999999 L666,654.6999999999999 Z" fill="#2a2420"/><ellipse cx="642" cy="613.8" rx="24.42" ry="37.582" fill="#c8a090"/><ellipse cx="644" cy="595.8" rx="14.8" ry="15.824000000000002" fill="#e0c0b0"/><rect x="626" y="643.8" width="34" height="14" fill="#c8a090"/></g>
<g opacity="0.85"><ellipse cx="631.08" cy="607.228" rx="4" ry="1.6" fill="#3a2820"/><ellipse cx="651.06" cy="607.228" rx="4" ry="1.6" fill="#3a2820"/><ellipse cx="641.44" cy="631.953" rx="7" ry="1.3" fill="#8a5850"/><rect x="613.32" y="615.14" width="8" height="6" fill="#e8d0a8" transform="rotate(35 613.32 615.14)"/></g>
</g>
<text x="530" y="669.72" font-size="12" fill="#c00000" textLength="133.4" lengthAdjust="spacingAndGlyphs" >‫اثرات مصرف مت آمفتامین‬</text>
<text x="738.2" y="572.9" font-size="7.5" fill="#c0392b" textLength="142.0" lengthAdjust="spacingAndGlyphs" >ارتباط مصرف شیشه (متامفتامین )با ایدز و هپاتیت BC</text>
<circle cx="734.50" cy="590.20" r="0.9" fill="#111"/>
<text x="739.1" y="592.0" font-size="5" fill="#6e6e78" textLength="145.1" lengthAdjust="spacingAndGlyphs" >‫افزایش احتمال ابتلا به ویروس ایدز و هپاتیت از پی آمدهای افزایش مصرف شیشه‬</text>
<text x="739.1" y="597.8" font-size="5" fill="#6e6e78" textLength="145.1" lengthAdjust="spacingAndGlyphs" >‫است خصوصا در انهایی که آن را تزریق می کنند و یا از سرنگ مشترک استفاده می‬</text>
<text x="739.1" y="603.8" font-size="5" fill="#6e6e78" textLength="145.1" lengthAdjust="spacingAndGlyphs" >‫نمایند . طبق تحقیقات مصرف متامفتامین و سایر مواد محرک در کوتاه مدت بر عکس‬</text>
<text x="739.1" y="609.3" font-size="5" fill="#6e6e78" textLength="145.1" lengthAdjust="spacingAndGlyphs" >‫تریاک سبب افزایش میل جنسی می شود ولی انکار کردم آن سبب کاهش میل جنسی به‬</text>
<text x="739.1" y="614.8" font-size="5" fill="#6e6e78" textLength="145.1" lengthAdjust="spacingAndGlyphs" >‫ویژه در مردان می شود در عین حال مصرف این ماده و به دنبال آن رفتارهای جنسی‬</text>
<text x="741" y="621.0" font-size="5" fill="#6e6e78" textLength="105.3" lengthAdjust="spacingAndGlyphs" >‫و بیماری ایدز را افزایش می دهد. افزایش خطر احتمال ابتلا به‬</text>
<text x="992.3" y="572.5" font-size="7.5" fill="#505064" textLength="69.9" lengthAdjust="spacingAndGlyphs" >‫آثاربلندمدت مصرف شیشه‬</text>
<path d="M953.40,589.60 L956.80,591.40 L953.40,593.20 L954.40,591.40 Z" fill="#c00000" />
<text x="960" y="594.14" font-size="6.5" fill="#c0392b" textLength="137.7" lengthAdjust="spacingAndGlyphs" >‫وابستگی و حالت جنون (روان پریشی )ناشی از اعتیاد با علائم‬</text>
<text x="959" y="600.64" font-size="6.5" fill="#c0392b" textLength="12" lengthAdjust="spacingAndGlyphs" >‫زیر :‬</text>
<path d="M952.80,604.40 L956.20,606.20 L952.80,608.00 L953.80,606.20 Z" fill="#111" />
<text x="960" y="608.0" font-size="5" fill="#6e6e78" textLength="43.4" lengthAdjust="spacingAndGlyphs" >‫سوء ظن و بدگمانی (پارانوئید)‬</text>
<path d="M952.80,611.20 L956.20,613.00 L952.80,614.80 L953.80,613.00 Z" fill="#111" />
<text x="960" y="614.8" font-size="5" fill="#6e6e78" textLength="68.4" lengthAdjust="spacingAndGlyphs" >‫توهم به معنای دیدن یا شنیدن انچه وجود ندارد‬</text>
<path d="M952.80,618.20 L956.20,620.00 L952.80,621.80 L953.80,620.00 Z" fill="#111" />
<text x="960" y="621.8" font-size="5" fill="#6e6e78" textLength="35" lengthAdjust="spacingAndGlyphs" >‫بی نظمی و اختلال خلق‬</text>
<path d="M952.80,625.30 L956.20,627.10 L952.80,628.90 L953.80,627.10 Z" fill="#111" />
<text x="960" y="628.9" font-size="5" fill="#6e6e78" textLength="58.2" lengthAdjust="spacingAndGlyphs" >‫فعالیتهای حرکتی بیش از اندازه تکراری‬</text>
<path d="M952.80,632.20 L956.20,634.00 L952.80,635.80 L953.80,634.00 Z" fill="#111" />
<text x="960" y="635.8" font-size="5" fill="#6e6e78" textLength="17.5" lengthAdjust="spacingAndGlyphs" >‫سکته مغزی‬</text>
<path d="M952.80,639.00 L956.20,640.80 L952.80,642.60 L953.80,640.80 Z" fill="#111" />
<text x="960" y="642.6" font-size="5" fill="#6e6e78" textLength="16.6" lengthAdjust="spacingAndGlyphs" >‫کاهش وزن‬</text>
<text x="954.4" y="649.6" font-size="5" fill="#c0392b" textLength="8.3" lengthAdjust="spacingAndGlyphs" >‫نکته:‬</text>
<text x="953.5" y="656.1" font-size="5" fill="#6e6e78" textLength="146.0" lengthAdjust="spacingAndGlyphs" >‫قطع مصرف یابیشه(متامفتامین )در فرد وابسته به ان عوارض و نشانه های زیر را بوجود می آورد :‬</text>
<text x="953.5" y="662.9" font-size="5" fill="#6e6e78" textLength="140.5" lengthAdjust="spacingAndGlyphs" >‫افسردگی ، اضطراب ، خستگی ، سوزش پرخاشگری و اشتیاق شدید برای مصرف مجدد ماده .‬</text>
<text x="1207.6" y="572.5" font-size="7.5" fill="#505064" textLength="78.6" lengthAdjust="spacingAndGlyphs" >‫آثار کوتاه مدت مصرف شیشه‬</text>
<path d="M1249.00,581.60 L1247.00,583.10 L1249.00,584.60" fill="none" stroke="#3a78c8" stroke-width="0.8" />
<text x="1202" y="585.33" font-size="6.2" fill="#222222" textLength="42.6" lengthAdjust="spacingAndGlyphs" font-weight="bold" >‫اختلال در قضاوت‬</text>
<path d="M1249.00,590.30 L1247.00,591.80 L1249.00,593.30" fill="none" stroke="#3a78c8" stroke-width="0.8" />
<text x="1225" y="594.03" font-size="6.2" fill="#222222" textLength="19.6" lengthAdjust="spacingAndGlyphs" font-weight="bold" >‫تنفس تند‬</text>
<path d="M1249.00,599.70 L1247.00,601.20 L1249.00,602.70" fill="none" stroke="#3a78c8" stroke-width="0.8" />
<text x="1193.7" y="603.43" font-size="6.2" fill="#222222" textLength="50.9" lengthAdjust="spacingAndGlyphs" font-weight="bold" >‫تند یا کند شدن و یا بی‬</text>
<path d="M1249.00,614.50 L1247.00,616.00 L1249.00,617.50" fill="none" stroke="#3a78c8" stroke-width="0.8" />
<text x="1192.8" y="618.23" font-size="6.2" fill="#222222" textLength="51.8" lengthAdjust="spacingAndGlyphs" font-weight="bold" >‫افزایش شدید دمای بدن‬</text>
<path d="M1249.00,622.30 L1247.00,623.80 L1249.00,625.30" fill="none" stroke="#3a78c8" stroke-width="0.8" />
<text x="1207.6" y="626.03" font-size="6.2" fill="#222222" textLength="37.0" lengthAdjust="spacingAndGlyphs" font-weight="bold" >‫ضعف عضلانی‬</text>
<path d="M1249.00,630.60 L1247.00,632.10 L1249.00,633.60" fill="none" stroke="#3a78c8" stroke-width="0.8" />
<text x="1225" y="634.33" font-size="6.2" fill="#222222" textLength="19.6" lengthAdjust="spacingAndGlyphs" font-weight="bold" >‫پرخاشگری‬</text>
<path d="M1249.00,638.00 L1247.00,639.50 L1249.00,641.00" fill="none" stroke="#3a78c8" stroke-width="0.8" />
<text x="1232.6" y="641.73" font-size="6.2" fill="#222222" textLength="12.0" lengthAdjust="spacingAndGlyphs" font-weight="bold" >‫تشنج‬</text>
<path d="M1249.00,646.30 L1247.00,647.80 L1249.00,649.30" fill="none" stroke="#3a78c8" stroke-width="0.8" />
<text x="1211.3" y="650.03" font-size="6.2" fill="#222222" textLength="33.3" lengthAdjust="spacingAndGlyphs" font-weight="bold" >‫افزایش انرژی‬</text>
<path d="M1249.00,655.50 L1247.00,657.00 L1249.00,658.50" fill="none" stroke="#3a78c8" stroke-width="0.8" />
<text x="1196" y="659.23" font-size="6.2" fill="#222222" textLength="48.6" lengthAdjust="spacingAndGlyphs" font-weight="bold" >‫کاهش یا افزایش فشار‬</text>
<text x="1203" y="609.03" font-size="6.2" fill="#222222" textLength="41.6" lengthAdjust="spacingAndGlyphs" font-weight="bold" >‫نظمی ضربان قلب‬</text>
<text x="1232.6" y="664.83" font-size="6.2" fill="#222222" textLength="12.0" lengthAdjust="spacingAndGlyphs" font-weight="bold" >‫خون‬</text>
<path d="M1267.90,580.40 L1271.30,582.20 L1267.90,584.00 L1268.90,582.20 Z" fill="#111" />
<text x="1274" y="584.0" font-size="5" fill="#6e6e78" textLength="23.3" lengthAdjust="spacingAndGlyphs" >‫تحریک پذیری‬</text>
<path d="M1267.90,588.40 L1271.30,590.20 L1267.90,592.00 L1268.90,590.20 Z" fill="#111" />
<text x="1274" y="592.0" font-size="5" fill="#6e6e78" textLength="22.5" lengthAdjust="spacingAndGlyphs" >‫تشنگی زیاد‬</text>
<path d="M1267.90,595.20 L1271.30,597.00 L1267.90,598.80 L1268.90,597.00 Z" fill="#111" />
<text x="1274" y="598.8" font-size="5" fill="#6e6e78" textLength="28" lengthAdjust="spacingAndGlyphs" >‫گیج و منگ شدن‬</text>
<path d="M1267.90,602.00 L1271.30,603.80 L1267.90,605.60 L1268.90,603.80 Z" fill="#111" />
<text x="1274" y="605.6" font-size="5" fill="#6e6e78" textLength="45.5" lengthAdjust="spacingAndGlyphs" >‫افزایش دامنه توجه و کاهش‬</text>
<path d="M1267.90,615.50 L1271.30,617.30 L1267.90,619.10 L1268.90,617.30 Z" fill="#111" />
<text x="1274" y="619.1" font-size="5" fill="#6e6e78" textLength="27" lengthAdjust="spacingAndGlyphs" >‫تهوع و استفراغ‬</text>
<path d="M1267.90,622.90 L1271.30,624.70 L1267.90,626.50 L1268.90,624.70 Z" fill="#111" />
<text x="1274" y="626.5" font-size="5" fill="#6e6e78" textLength="24" lengthAdjust="spacingAndGlyphs" >‫افزایش فعالیت‬</text>
<path d="M1267.90,630.30 L1271.30,632.10 L1267.90,633.90 L1268.90,632.10 Z" fill="#111" />
<text x="1274" y="633.9" font-size="5" fill="#6e6e78" textLength="23.3" lengthAdjust="spacingAndGlyphs" >‫خشک شدن دهان‬</text>
<path d="M1267.90,637.20 L1271.30,639.00 L1267.90,640.80 L1268.90,639.00 Z" fill="#111" />
<text x="1274" y="640.8" font-size="5" fill="#6e6e78" textLength="19.6" lengthAdjust="spacingAndGlyphs" >‫کاهش اشتها‬</text>
<path d="M1267.90,645.10 L1271.30,646.90 L1267.90,648.70 L1268.90,646.90 Z" fill="#111" />
<text x="1274" y="648.7" font-size="5" fill="#6e6e78" textLength="28" lengthAdjust="spacingAndGlyphs" >‫اضطراب و ترس‬</text>
<path d="M1267.90,652.50 L1271.30,654.30 L1267.90,656.10 L1268.90,654.30 Z" fill="#111" />
<text x="1274" y="656.1" font-size="5" fill="#6e6e78" textLength="32.5" lengthAdjust="spacingAndGlyphs" >‫سرخوشی و شادی‬</text>
<text x="1274" y="611.8" font-size="5" fill="#6e6e78" textLength="12" lengthAdjust="spacingAndGlyphs" >‫خستگی‬</text>
<text x="228" y="327" font-size="16" fill="#444444" textLength="14.6" lengthAdjust="spacingAndGlyphs" >54</text>
<polygon points="67.50,315.80 68.82,318.98 72.26,319.25 69.64,321.50 70.44,324.85 67.50,323.05 64.56,324.85 65.36,321.50 62.74,319.25 66.18,318.98" fill="#555555"/>
<rect x="61" y="319.5" width="1.3" height="1.3" fill="#777" />
<text x="447" y="327" font-size="16" fill="#444444" textLength="14.6" lengthAdjust="spacingAndGlyphs" >53</text>
<polygon points="286.50,315.80 287.82,318.98 291.26,319.25 288.64,321.50 289.44,324.85 286.50,323.05 283.56,324.85 284.36,321.50 281.74,319.25 285.18,318.98" fill="#555555"/>
<rect x="280" y="319.5" width="1.3" height="1.3" fill="#777" />
<text x="666" y="327" font-size="16" fill="#444444" textLength="14.6" lengthAdjust="spacingAndGlyphs" >52</text>
<polygon points="505.50,315.80 506.82,318.98 510.26,319.25 507.64,321.50 508.44,324.85 505.50,323.05 502.56,324.85 503.36,321.50 500.74,319.25 504.18,318.98" fill="#555555"/>
<rect x="499" y="319.5" width="1.3" height="1.3" fill="#777" />
<text x="885" y="327" font-size="16" fill="#444444" textLength="14.6" lengthAdjust="spacingAndGlyphs" >51</text>
<polygon points="724.50,315.80 725.82,318.98 729.26,319.25 726.64,321.50 727.44,324.85 724.50,323.05 721.56,324.85 722.36,321.50 719.74,319.25 723.18,318.98" fill="#555555"/>
<rect x="718" y="319.5" width="1.3" height="1.3" fill="#777" />
<text x="1104" y="327" font-size="16" fill="#444444" textLength="14.6" lengthAdjust="spacingAndGlyphs" >50</text>
<polygon points="943.50,315.80 944.82,318.98 948.26,319.25 945.64,321.50 946.44,324.85 943.50,323.05 940.56,324.85 941.36,321.50 938.74,319.25 942.18,318.98" fill="#555555"/>
<rect x="937" y="319.5" width="1.3" height="1.3" fill="#777" />
<text x="1323" y="327" font-size="16" fill="#444444" textLength="14.6" lengthAdjust="spacingAndGlyphs" >49</text>
<polygon points="1162.50,315.80 1163.82,318.98 1167.26,319.25 1164.64,321.50 1165.44,324.85 1162.50,323.05 1159.56,324.85 1160.36,321.50 1157.74,319.25 1161.18,318.98" fill="#555555"/>
<rect x="1156" y="319.5" width="1.3" height="1.3" fill="#777" />
<text x="228" y="517" font-size="16" fill="#444444" textLength="14.6" lengthAdjust="spacingAndGlyphs" >60</text>
<polygon points="67.50,505.80 68.82,508.98 72.26,509.25 69.64,511.50 70.44,514.85 67.50,513.05 64.56,514.85 65.36,511.50 62.74,509.25 66.18,508.98" fill="#555555"/>
<rect x="61" y="509.5" width="1.3" height="1.3" fill="#777" />
<text x="447" y="517" font-size="16" fill="#444444" textLength="14.6" lengthAdjust="spacingAndGlyphs" >59</text>
<text x="666" y="517" font-size="16" fill="#444444" textLength="14.6" lengthAdjust="spacingAndGlyphs" >58</text>
<polygon points="505.50,505.80 506.82,508.98 510.26,509.25 507.64,511.50 508.44,514.85 505.50,513.05 502.56,514.85 503.36,511.50 500.74,509.25 504.18,508.98" fill="#555555"/>
<rect x="499" y="509.5" width="1.3" height="1.3" fill="#777" />
<text x="885" y="517" font-size="16" fill="#444444" textLength="14.6" lengthAdjust="spacingAndGlyphs" >57</text>
<polygon points="724.50,505.80 725.82,508.98 729.26,509.25 726.64,511.50 727.44,514.85 724.50,513.05 721.56,514.85 722.36,511.50 719.74,509.25 723.18,508.98" fill="#555555"/>
<rect x="718" y="509.5" width="1.3" height="1.3" fill="#777" />
<text x="1104" y="517" font-size="16" fill="#444444" textLength="14.6" lengthAdjust="spacingAndGlyphs" >56</text>
<polygon points="943.50,505.80 944.82,508.98 948.26,509.25 945.64,511.50 946.44,514.85 943.50,513.05 940.56,514.85 941.36,511.50 938.74,509.25 942.18,508.98" fill="#555555"/>
<rect x="937" y="509.5" width="1.3" height="1.3" fill="#777" />
<text x="1323" y="517" font-size="16" fill="#444444" textLength="14.6" lengthAdjust="spacingAndGlyphs" >55</text>
<polygon points="1162.50,505.80 1163.82,508.98 1167.26,509.25 1164.64,511.50 1165.44,514.85 1162.50,513.05 1159.56,514.85 1160.36,511.50 1157.74,509.25 1161.18,508.98" fill="#555555"/>
<rect x="1156" y="509.5" width="1.3" height="1.3" fill="#777" />
<text x="228" y="707" font-size="16" fill="#444444" textLength="14.6" lengthAdjust="spacingAndGlyphs" >66</text>
<polygon points="67.50,695.80 68.82,698.98 72.26,699.25 69.64,701.50 70.44,704.85 67.50,703.05 64.56,704.85 65.36,701.50 62.74,699.25 66.18,698.98" fill="#555555"/>
<rect x="61" y="699.5" width="1.3" height="1.3" fill="#777" />
<text x="447" y="707" font-size="16" fill="#444444" textLength="14.6" lengthAdjust="spacingAndGlyphs" >65</text>
<polygon points="286.50,695.80 287.82,698.98 291.26,699.25 288.64,701.50 289.44,704.85 286.50,703.05 283.56,704.85 284.36,701.50 281.74,699.25 285.18,698.98" fill="#555555"/>
<rect x="280" y="699.5" width="1.3" height="1.3" fill="#777" />
<text x="666" y="707" font-size="16" fill="#444444" textLength="14.6" lengthAdjust="spacingAndGlyphs" >64</text>
<polygon points="505.50,695.80 506.82,698.98 510.26,699.25 507.64,701.50 508.44,704.85 505.50,703.05 502.56,704.85 503.36,701.50 500.74,699.25 504.18,698.98" fill="#555555"/>
<rect x="499" y="699.5" width="1.3" height="1.3" fill="#777" />
<text x="885" y="707" font-size="16" fill="#444444" textLength="14.6" lengthAdjust="spacingAndGlyphs" >63</text>
<polygon points="724.50,695.80 725.82,698.98 729.26,699.25 726.64,701.50 727.44,704.85 724.50,703.05 721.56,704.85 722.36,701.50 719.74,699.25 723.18,698.98" fill="#555555"/>
<rect x="718" y="699.5" width="1.3" height="1.3" fill="#777" />
<text x="1104" y="707" font-size="16" fill="#444444" textLength="14.6" lengthAdjust="spacingAndGlyphs" >62</text>
<polygon points="943.50,695.80 944.82,698.98 948.26,699.25 945.64,701.50 946.44,704.85 943.50,703.05 940.56,704.85 941.36,701.50 938.74,699.25 942.18,698.98" fill="#555555"/>
<rect x="937" y="699.5" width="1.3" height="1.3" fill="#777" />
<text x="1323" y="707" font-size="16" fill="#444444" textLength="14.6" lengthAdjust="spacingAndGlyphs" >61</text>
<polygon points="1162.50,695.80 1163.82,698.98 1167.26,699.25 1164.64,701.50 1165.44,704.85 1162.50,703.05 1159.56,704.85 1160.36,701.50 1157.74,699.25 1161.18,698.98" fill="#555555"/>
<rect x="1156" y="699.5" width="1.3" height="1.3" fill="#777" />
<rect x="1" y="150" width="14" height="556" fill="#dadada" />
<rect x="1.5" y="152.5" width="14" height="14" fill="#ffffff" stroke="#a0a0a0" stroke-width="1" />
<path d="M5,161 L8.5,157.3 L12,161 Z" fill="#606060" />
<rect x="1.5" y="443.5" width="14" height="100" fill="#ffffff" stroke="#a8a8a8" stroke-width="1" />
<rect x="1.5" y="689.5" width="14" height="14" fill="#ffffff" stroke="#d0d0d0" stroke-width="1" />
<path d="M5,695 L12,695 L8.5,699 Z" fill="#606060" />
<rect x="0" y="706" width="1366" height="22" fill="#f1f1f1" />
<rect x="0" y="706" width="1366" height="1" fill="#d4d4d4" />
<text x="7" y="720.7" font-size="11" fill="#444444" textLength="70" lengthAdjust="spacingAndGlyphs" >Slide 89 of 89</text>
<path d="M96.5,711 H101.5 V722 H96.5 Z M101.5,711 H106 V722 H101.5" fill="none" stroke="#666" stroke-width="0.9" />
<path d="M104,716 L109,721 M109,716 L104,721" fill="none" stroke="#666" stroke-width="1" />
<text x="127" y="720.7" font-size="11" fill="#444444" textLength="116" lengthAdjust="spacingAndGlyphs" >English (United States)</text>
<rect x="1049" y="707" width="38" height="21" fill="#cfcfcf" />
<rect x="1023.5" y="710.5" width="13" height="12" fill="none" stroke="#666" stroke-width="1" />
<rect x="1026" y="713" width="8" height="7" fill="none" stroke="#666" stroke-width="1" />
<line x1="1026" y1="710.5" x2="1026" y2="722.5" stroke="#666" stroke-width="1" />
<rect x="1061.5" y="710.5" width="5.5" height="4.5" fill="none" stroke="#666" stroke-width="1" />
<rect x="1069.5" y="710.5" width="5.5" height="4.5" fill="none" stroke="#666" stroke-width="1" />
<rect x="1061.5" y="717.5" width="5.5" height="4.5" fill="none" stroke="#666" stroke-width="1" />
<rect x="1069.5" y="717.5" width="5.5" height="4.5" fill="none" stroke="#666" stroke-width="1" />
<path d="M1099.5,711 H1105.5 V722.5 H1099.5 Z M1105.5,711 H1111.5 V722.5 H1105.5 Z" fill="none" stroke="#666" stroke-width="1" />
<line x1="1101" y1="714" x2="1104" y2="714" stroke="#666" stroke-width="0.8" />
<line x1="1107" y1="714" x2="1110" y2="714" stroke="#666" stroke-width="0.8" />
<line x1="1101" y1="716.5" x2="1104" y2="716.5" stroke="#666" stroke-width="0.8" />
<line x1="1107" y1="716.5" x2="1110" y2="716.5" stroke="#666" stroke-width="0.8" />
<line x1="1101" y1="719" x2="1104" y2="719" stroke="#666" stroke-width="0.8" />
<line x1="1107" y1="719" x2="1110" y2="719" stroke="#666" stroke-width="0.8" />
<rect x="1137" y="711" width="13" height="1.3" fill="#666" />
<rect x="1138.5" y="712.3" width="10" height="6.5" fill="none" stroke="#666" stroke-width="1" />
<path d="M1143.5,719 V722.5 M1140.5,722.5 H1146.5" fill="none" stroke="#666" stroke-width="1" />
<rect x="1167.7" y="716.5" width="5.5" height="1.5" fill="#555" />
<rect x="1178" y="716.5" width="100" height="1" fill="#9a9a9a" />
<rect x="1212" y="711" width="4.5" height="11" fill="#555" />
<rect x="1228" y="713" width="1" height="7" fill="#9a9a9a" />
<path d="M1282,717.2 H1290 M1286,713.2 V721.2" fill="none" stroke="#555" stroke-width="1.8" />
<text x="1305" y="720.7" font-size="11" fill="#444444" textLength="21" lengthAdjust="spacingAndGlyphs" >76%</text>
<rect x="1346" y="710.5" width="13" height="12.5" fill="none" stroke="#777" stroke-width="1" />
<path d="M1349,713.5 L1351,715.5 M1356,713.5 L1354,715.5 M1349,720 L1351,718 M1356,720 L1354,718" fill="none" stroke="#777" stroke-width="1" />
<defs><filter id="wb" x="-50%" y="-50%" width="200%" height="200%"><feGaussianBlur stdDeviation="6"/></filter></defs>
<rect x="0" y="728" width="1366" height="40" fill="#191513" />
<g filter="url(#wb)"><ellipse cx="980" cy="770" rx="90" ry="14" fill="#060505"/><ellipse cx="900" cy="740" rx="80" ry="9" fill="#2a2622"/><ellipse cx="820" cy="745" rx="40" ry="10" fill="#221c18"/><ellipse cx="1180" cy="745" rx="70" ry="12" fill="#201b18"/><ellipse cx="600" cy="748" rx="60" ry="12" fill="#1e1916"/></g>
<rect x="0" y="728" width="48" height="40" fill="#17110f" />
<rect x="48" y="728" width="344" height="40" fill="#333333" />
<path d="M16,741.5 L22.8,740.5 V747.3 H16 Z M23.8,740.3 L32,739 V747.3 H23.8 Z M16,748.3 H22.8 V755 L16,754 Z M23.8,748.3 H32 V756.5 L23.8,755.3 Z" fill="#ffffff" />
<circle cx="68" cy="748" r="9" fill="none" stroke="#ffffff" stroke-width="2.2"/>
<text x="85" y="754.3" font-size="15" fill="#a9a9a9" textLength="126" lengthAdjust="spacingAndGlyphs" >Type here to search</text>
<rect x="368.5" y="740.5" width="6" height="10" fill="none" stroke="#b0b0b0" stroke-width="1.2" rx="3" />
<path d="M366.5,747 a5,5 0 0 0 10,0 M371.5,752 V756 M368.5,756.5 H374.5" fill="none" stroke="#b0b0b0" stroke-width="1.1" />
<rect x="410.5" y="741.5" width="11.5" height="13" fill="none" stroke="#ffffff" stroke-width="1.3" />
<path d="M409,744 H406.5 V752 H409 M423.5,744 H426 V752 H423.5" fill="none" stroke="#ffffff" stroke-width="1.2" />
<path d="M467,737.5 C474,737.5 478,742 477.5,749.5 H462.5 C462.5,753 465,755.5 469,755.5 C472,755.5 474.5,754.5 476.5,753 V757.5 C474,758.5 471.5,759 468.5,759 C461,759 457,754.5 457,748.5 C457,742 461.5,737.5 467,737.5 Z M462.7,746 H472 C472,742.5 470,740.8 467.5,740.8 C465,740.8 463,742.8 462.7,746 Z" fill="#1a86dc" />
<path d="M457.5,747 C459,740 463,738 466,738.5 C462,740 460,743 459.8,746.5 Z" fill="#1a86dc" />
<ellipse cx="515.3" cy="747.3" rx="8.6" ry="11.2" fill="#0b3a78"/>
<path d="M511,742.5 L519.5,751.5 L515.3,755.5 V739 L519.5,743 L511,752" fill="none" stroke="#ffffff" stroke-width="1.4" />
<path d="M554,739 H561.5 L563.5,741 H575.5 V757 H554 Z" fill="#f6d36f" />
<rect x="554" y="742" width="21.5" height="15" fill="#fbe08a" />
<path d="M560,757 V751 H569.5 V757" fill="none" stroke="#2a9ae0" stroke-width="2.6" />
<rect x="555.5" y="740" width="3" height="1.2" fill="#48b0e8" />
<path d="M609.5,737.5 L625,741 V752.5 L609.5,750 Z" fill="#3fb0f2" />
<path d="M603,753.5 L613,750.5 L622,754 L611.5,757.8 Z" fill="#d8d8d8" />
<path d="M614,751 L618,750 L624,751.5 L620,752.8 Z" fill="#c8c8c8" />
<path d="M663,738 L673.2,748 L663,757.8 L652.7,748 Z" fill="#ffffff" />
<path d="M663,740.5 L670.8,748 L663,755.5 L655.2,748 Z" fill="#202020" />
<path d="M667.5,740 L657,749.5 L662,749.8 L656.5,757 L668.5,746.5 L663.5,746.3 Z" fill="#f5a623" />
<path d="M701,751 C699,743 706,737.5 713.5,738 C720,738.5 722.5,743 719,746.5 C716.5,749 714,748 712.5,750.5 C711,753.5 714,757.5 710,758.5 C705.5,759.5 702,755 701,751 Z" fill="#a8d4f2" />
<circle cx="705.5" cy="748" r="1.8" fill="#e0443a"/><circle cx="709" cy="743.5" r="1.8" fill="#5ac05a"/><circle cx="714" cy="742.5" r="1.8" fill="#f0c030"/><circle cx="708.5" cy="751.5" r="1.5" fill="#203040"/>
<path d="M712,759.5 L722.5,738.5" fill="none" stroke="#e08a2a" stroke-width="1.6" />
<path d="M721,740 L723.7,736.6 L724,741 Z" fill="#e8c890" />
<rect x="643.3" y="766" width="39.5" height="2" fill="#ee82bb" />
<rect x="692.3" y="766" width="39.5" height="2" fill="#ee82bb" />
<rect x="737" y="728" width="48" height="40" fill="#3f3c39" />
<rect x="737" y="766" width="48" height="2" fill="#ee82bb" />
<path d="M749.6,739 L763,736.3 V759 L749.6,756.5 Z" fill="#d04a25" />
<rect x="762" y="740" width="10" height="16" fill="#ffffff" stroke="#d04a25" stroke-width="1" />
<path d="M753.5,753 V743.5 H757.5 A2.6,2.6 0 0 1 757.5,748.7 H753.5" fill="none" stroke="#ffffff" stroke-width="1.5" />
<path d="M765,743 a3,3 0 1 0 3,3 h-3 z" fill="#d04a25" />
<line x1="764.5" y1="751.5" x2="770" y2="751.5" stroke="#d04a25" stroke-width="1" />
<line x1="764.5" y1="753.5" x2="770" y2="753.5" stroke="#d04a25" stroke-width="1" />
<path d="M1123.5,751 L1129,745.5 L1134.5,751" fill="none" stroke="#ffffff" stroke-width="1.2" />
<path d="M1145,745.5 H1148 L1152,742 V754 L1148,750.5 H1145 Z" fill="none" stroke="#ffffff" stroke-width="1.1" />
<path d="M1154,745.5 a3,3 0 0 1 0,5 M1156,743.5 a5.5,5.5 0 0 1 0,9 M1158.3,741.5 a8,8 0 0 1 0,13" fill="none" stroke="#ffffff" stroke-width="1.1" />
<rect x="1172" y="745" width="11" height="8" fill="none" stroke="#ffffff" stroke-width="1.2" />
<rect x="1183" y="747.5" width="1.5" height="3" fill="#ffffff" />
<rect x="1173.5" y="746.5" width="6" height="5" fill="#ffffff" />
<path d="M1169.5,749 H1172 M1170,746.5 V751.5" fill="none" stroke="#ffffff" stroke-width="1" />
<text x="1192.5" y="747" font-size="8" fill="#ffffff" >*</text>
<path d="M1198,754.5 a10,10 0 0 1 10,-10 M1200.5,754.5 a7.5,7.5 0 0 1 7.5,-7.5 M1203,754.5 a5,5 0 0 1 5,-5" fill="none" stroke="#9a9a9a" stroke-width="1" />
<circle cx="1206.5" cy="753.5" r="1.2" fill="#9a9a9a"/>
<text x="1226" y="746" font-size="11" fill="#ffffff" textLength="9" lengthAdjust="spacingAndGlyphs" >فا</text>
<text x="1224.6" y="761" font-size="12.5" fill="#ffffff" textLength="12" lengthAdjust="spacingAndGlyphs" >FA</text>
<text x="1256.8" y="743.5" font-size="12.5" fill="#ffffff" textLength="48" lengthAdjust="spacingAndGlyphs" >11:50 AM</text>
<text x="1255.4" y="761" font-size="12.5" fill="#ffffff" textLength="51" lengthAdjust="spacingAndGlyphs" >7/31/2023</text>
<path d="M1325,740.5 H1341.5 V751.5 H1333 L1329.5,754.5 V751.5 H1325 Z" fill="#ffffff" />
<line x1="1327.5" y1="743.5" x2="1339" y2="743.5" stroke="#222" stroke-width="1" />
<line x1="1327.5" y1="746" x2="1339" y2="746" stroke="#222" stroke-width="1" />
<line x1="1327.5" y1="748.5" x2="1339" y2="748.5" stroke="#222" stroke-width="1" />
<circle cx="1341" cy="756" r="7.5" fill="#2c2c2c" stroke="#6a6a6a" stroke-width="1"/>
<text x="1338.2" y="760.2" font-size="10.5" fill="#ffffff" font-weight="bold" >1</text>
<rect x="1361" y="728" width="1" height="40" fill="#4a4a4a" />
<text x="1073.7" y="668.5" font-size="20" fill="#8c8c8c" textLength="156" lengthAdjust="spacingAndGlyphs" fill-opacity="0.72">Activate Windows</text>
<text x="1073.7" y="690" font-size="14.5" fill="#8c8c8c" textLength="235" lengthAdjust="spacingAndGlyphs" fill-opacity="0.72">Go to Settings to activate Windows.</text>
</svg></body></html>
